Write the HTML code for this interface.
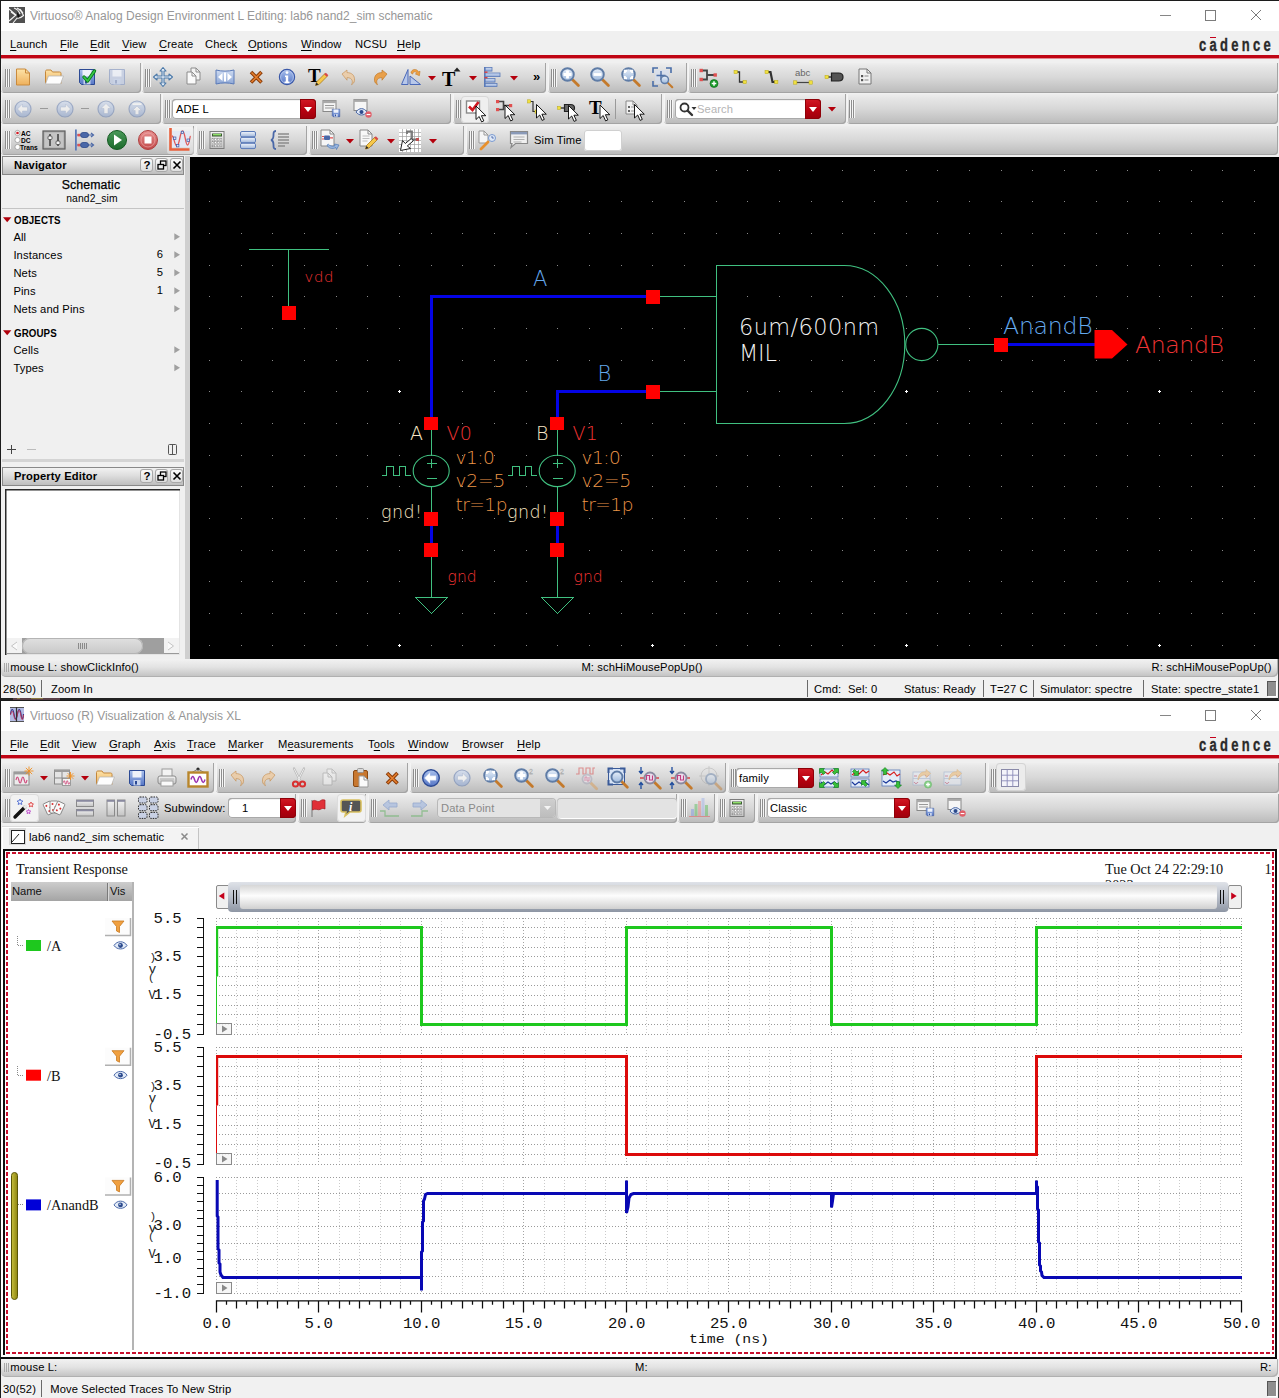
<!DOCTYPE html>
<html lang="en"><head><meta charset="utf-8"><title>Virtuoso</title><style>
html,body{margin:0;padding:0;}
body{width:1279px;height:1398px;overflow:hidden;background:#f0f0f0;position:relative;font-family:'Liberation Sans',sans-serif;font-size:11.2px;}
#root{position:absolute;left:0;top:0;width:1279px;height:1398px;overflow:hidden;}
#root div,#root svg,#root span.t{position:absolute;}
#root svg{overflow:visible;display:block;}
span.t{white-space:nowrap;letter-spacing:0.12px;}
u{text-decoration:underline;text-underline-offset:1.5px;text-decoration-thickness:1px;}
</style></head>
<body><div id="root">
<svg width="0" height="0" style="position:absolute"><defs>
<linearGradient id="gOr" x1="0" y1="0" x2="0" y2="1"><stop offset="0" stop-color="#fde3a8"/><stop offset="1" stop-color="#eeb05c"/></linearGradient>
<linearGradient id="gBl" x1="0" y1="0" x2="0" y2="1"><stop offset="0" stop-color="#a8c0ec"/><stop offset="1" stop-color="#5676c6"/></linearGradient>
<linearGradient id="gBlL" x1="0" y1="0" x2="0" y2="1"><stop offset="0" stop-color="#cfdcf2"/><stop offset="1" stop-color="#8fa8d6"/></linearGradient>
<linearGradient id="gGl" x1="0" y1="0" x2="0" y2="1"><stop offset="0" stop-color="#e8f0fa"/><stop offset="1" stop-color="#9db8dc"/></linearGradient>
<linearGradient id="gDb" x1="0" y1="0" x2="0" y2="1"><stop offset="0" stop-color="#f2f6fc"/><stop offset="1" stop-color="#9fb6da"/></linearGradient>
<linearGradient id="gGy" x1="0" y1="0" x2="0" y2="1"><stop offset="0" stop-color="#f4f4f4"/><stop offset="1" stop-color="#c4c4c4"/></linearGradient>
<linearGradient id="gGn" x1="0" y1="0" x2="0" y2="1"><stop offset="0" stop-color="#4a9a5a"/><stop offset="1" stop-color="#1c6a2c"/></linearGradient>
<linearGradient id="gRd" x1="0" y1="0" x2="0" y2="1"><stop offset="0" stop-color="#e89090"/><stop offset="1" stop-color="#c04848"/></linearGradient>
</defs></svg><div style="left:0px;top:0px;width:1279px;height:1px;background:#1c1c1c;"></div><div style="left:1px;top:1px;width:1278px;height:30px;background:#fff;"></div><svg style="left:9px;top:7px;" width="16" height="16" viewBox="0 0 16 16"><rect width="16" height="16" fill="#505050"/><path d="M0 2l7 6-7 6M2 5l5 3.5M5 1c3 1 5 3 6 6M8 1c3 1.5 5 4 6.5 7.5c-2 2-4 3-6.5 3M4 16l5-6M11 2l3 4" stroke="#f4f4f4" stroke-width="1.1" fill="none"/><path d="M8 5l3 4-2.5 2.5z" fill="#111"/></svg><span class="t" style="left:30px;top:10.14px;font-size:12px;line-height:12px;color:#979797;letter-spacing:0;">Virtuoso® Analog Design Environment L Editing: lab6 nand2_sim schematic</span><div style="left:1160px;top:15px;width:11px;height:1px;background:#868686;"></div><div style="left:1205px;top:10px;width:9px;height:9px;border:1px solid #7c7c7c;"></div><svg style="left:1250px;top:9px;" width="12" height="12" viewBox="0 0 12 12"><path d="M1 1l10 10M11 1l-10 10" stroke="#7a7a7a" stroke-width="1"/></svg><div style="left:1px;top:31px;width:1278px;height:24px;background:#f0f0f0;"></div><span class="t" style="left:10px;top:38.52px;font-size:11.2px;line-height:11.2px;color:#000;"><u>L</u>aunch</span><span class="t" style="left:60px;top:38.52px;font-size:11.2px;line-height:11.2px;color:#000;"><u>F</u>ile</span><span class="t" style="left:90px;top:38.52px;font-size:11.2px;line-height:11.2px;color:#000;"><u>E</u>dit</span><span class="t" style="left:122px;top:38.52px;font-size:11.2px;line-height:11.2px;color:#000;"><u>V</u>iew</span><span class="t" style="left:159px;top:38.52px;font-size:11.2px;line-height:11.2px;color:#000;"><u>C</u>reate</span><span class="t" style="left:205px;top:38.52px;font-size:11.2px;line-height:11.2px;color:#000;">Chec<u>k</u></span><span class="t" style="left:248px;top:38.52px;font-size:11.2px;line-height:11.2px;color:#000;"><u>O</u>ptions</span><span class="t" style="left:301px;top:38.52px;font-size:11.2px;line-height:11.2px;color:#000;"><u>W</u>indow</span><span class="t" style="left:355px;top:38.52px;font-size:11.2px;line-height:11.2px;color:#000;">NCSU</span><span class="t" style="left:397px;top:38.52px;font-size:11.2px;line-height:11.2px;color:#000;"><u>H</u>elp</span><span class="t" style="left:1199px;top:36.69px;font-size:17.5px;line-height:17.5px;color:#2a2a2a;font-weight:700;letter-spacing:4.5px;transform:scaleX(0.74);transform-origin:0 0;-webkit-text-stroke:0.35px #2a2a2a;">cadence</span><div style="left:1210px;top:37px;width:6px;height:1px;background:#c4001a;"></div><div style="left:1px;top:55px;width:1278px;height:3px;background:#c00414;"></div><div style="left:1px;top:58px;width:1278px;height:1px;background:#e08a92;"></div><div style="left:1px;top:62.5px;width:140px;height:30px;background:linear-gradient(#eeeeee 0%,#e6e6e6 14%,#d8d8d8 48%,#c3c3c3 85%,#b9b9b9 100%);border-radius:0 0 4px 4px;box-shadow:inset -1px -1px 0 #a4a4a4, inset 1px 0 0 #f4f4f4;"></div><div style="left:142px;top:62.5px;width:404px;height:30px;background:linear-gradient(#eeeeee 0%,#e6e6e6 14%,#d8d8d8 48%,#c3c3c3 85%,#b9b9b9 100%);border-radius:0 0 4px 4px;box-shadow:inset -1px -1px 0 #a4a4a4, inset 1px 0 0 #f4f4f4;"></div><div style="left:548px;top:62.5px;width:138.5px;height:30px;background:linear-gradient(#eeeeee 0%,#e6e6e6 14%,#d8d8d8 48%,#c3c3c3 85%,#b9b9b9 100%);border-radius:0 0 4px 4px;box-shadow:inset -1px -1px 0 #a4a4a4, inset 1px 0 0 #f4f4f4;"></div><div style="left:687.5px;top:62.5px;width:590.0px;height:30px;background:linear-gradient(#eeeeee 0%,#e6e6e6 14%,#d8d8d8 48%,#c3c3c3 85%,#b9b9b9 100%);border-radius:0 0 4px 4px;box-shadow:inset -1px -1px 0 #a4a4a4, inset 1px 0 0 #f4f4f4;"></div><div style="left:5px;top:69px;width:1px;height:18px;background:#8e8e8e;"></div><div style="left:6px;top:69px;width:1px;height:18px;background:#f6f6f6;"></div><div style="left:7px;top:69px;width:1px;height:18px;background:#8e8e8e;"></div><div style="left:8px;top:69px;width:1px;height:18px;background:#f6f6f6;"></div><div style="left:9px;top:69px;width:1px;height:18px;background:#8e8e8e;"></div><div style="left:10px;top:69px;width:1px;height:18px;background:#f6f6f6;"></div><div style="left:145px;top:69px;width:1px;height:18px;background:#8e8e8e;"></div><div style="left:146px;top:69px;width:1px;height:18px;background:#f6f6f6;"></div><div style="left:147px;top:69px;width:1px;height:18px;background:#8e8e8e;"></div><div style="left:148px;top:69px;width:1px;height:18px;background:#f6f6f6;"></div><div style="left:149px;top:69px;width:1px;height:18px;background:#8e8e8e;"></div><div style="left:150px;top:69px;width:1px;height:18px;background:#f6f6f6;"></div><div style="left:551px;top:69px;width:1px;height:18px;background:#8e8e8e;"></div><div style="left:552px;top:69px;width:1px;height:18px;background:#f6f6f6;"></div><div style="left:553px;top:69px;width:1px;height:18px;background:#8e8e8e;"></div><div style="left:554px;top:69px;width:1px;height:18px;background:#f6f6f6;"></div><div style="left:555px;top:69px;width:1px;height:18px;background:#8e8e8e;"></div><div style="left:556px;top:69px;width:1px;height:18px;background:#f6f6f6;"></div><div style="left:691px;top:69px;width:1px;height:18px;background:#8e8e8e;"></div><div style="left:692px;top:69px;width:1px;height:18px;background:#f6f6f6;"></div><div style="left:693px;top:69px;width:1px;height:18px;background:#8e8e8e;"></div><div style="left:694px;top:69px;width:1px;height:18px;background:#f6f6f6;"></div><div style="left:695px;top:69px;width:1px;height:18px;background:#8e8e8e;"></div><div style="left:696px;top:69px;width:1px;height:18px;background:#f6f6f6;"></div><svg style="left:11.0px;top:64.5px;" width="24" height="24" viewBox="0 0 24 24"><path d="M5.5 4h9l4 4v12h-13z" fill="url(#gOr)" stroke="#c98a3c" stroke-width="1"/><path d="M14.5 4v4h4" fill="none" stroke="#c98a3c" stroke-width="1"/></svg><svg style="left:42.0px;top:64.5px;" width="24" height="24" viewBox="0 0 24 24"><path d="M3.5 6.5c0-1 .5-1.5 1.5-1.5h4l1.5 2h7c1 0 1.5.5 1.5 1.5v10h-15.5z" fill="url(#gOr)" stroke="#c4873a" stroke-width="1"/><path d="M6.5 11h15l-3 8h-15z" fill="#fdfdfd" stroke="#b9b9b9" stroke-width="0.8"/></svg><svg style="left:75.0px;top:64.5px;" width="24" height="24" viewBox="0 0 24 24"><g opacity="1"><path d="M4.5 4.5h15v15h-13l-2-2z" fill="url(#gBl)" stroke="#2c4a94" stroke-width="1"/><rect x="7.5" y="5" width="9" height="6.5" fill="#eef2fa"/><rect x="8.5" y="14" width="7" height="5.5" fill="#c8d4ec"/><rect x="10" y="15" width="2" height="3.5" fill="#2c4a94"/></g><path d="M9 12l3.5 4 7-10" fill="none" stroke="#0a7a1a" stroke-width="3.4" stroke-linecap="round" stroke-linejoin="round"/><path d="M9 12l3.5 4 7-10" fill="none" stroke="#38c848" stroke-width="1.6" stroke-linecap="round" stroke-linejoin="round"/></svg><svg style="left:105.0px;top:64.5px;" width="24" height="24" viewBox="0 0 24 24"><g opacity="0.8"><path d="M4.5 4.5h15v15h-13l-2-2z" fill="#c4cee4" stroke="#97a6c8" stroke-width="1"/><rect x="7.5" y="5" width="9" height="6.5" fill="#eef2fa"/><rect x="8.5" y="14" width="7" height="5.5" fill="#c8d4ec"/><rect x="10" y="15" width="2" height="3.5" fill="#97a6c8"/></g></svg><svg style="left:151.0px;top:64.5px;" width="24" height="24" viewBox="0 0 24 24"><path d="M12 2.5l3 3.5h-2v5h5v-2l3.5 3-3.5 3v-2h-5v5h2l-3 3.5-3-3.5h2v-5h-5v2l-3.5-3 3.5-3v2h5v-5h-2z" fill="#e8f0fa" stroke="#4a78a8" stroke-width="1.1" stroke-linejoin="round"/></svg><svg style="left:182.0px;top:64.5px;" width="24" height="24" viewBox="0 0 24 24"><path d="M9 3h5l4 4v8h-9z" fill="#f4f4f4" stroke="#8c8c8c" stroke-width="1"/><path d="M14 3v4h4" fill="none" stroke="#8c8c8c" stroke-width="1"/><path d="M5 7h5l4 4v8h-9z" fill="#fafafa" stroke="#8c8c8c" stroke-width="1"/><path d="M10 7v4h4" fill="none" stroke="#8c8c8c" stroke-width="1"/></svg><svg style="left:213.0px;top:64.5px;" width="24" height="24" viewBox="0 0 24 24"><path d="M3 5c6 1.5 12 1.5 18 0v14c-6-1.5-12-1.5-18 0z" fill="url(#gBlL)" stroke="#5a7ab8" stroke-width="1"/><path d="M5 12l4.5-4v8zM19 12l-4.5-4v8z" fill="#fff"/><rect x="11" y="7.5" width="2" height="9" fill="#fff"/></svg><svg style="left:244.0px;top:64.5px;" width="24" height="24" viewBox="0 0 24 24"><path d="M7 7l10.5 10.5M17.5 7l-10.5 10.5" stroke="#8a3c08" stroke-width="3.6" stroke-linecap="butt"/><path d="M7.5 7.5l9.5 9.5M17 7.5l-9.5 9.5" stroke="#e88030" stroke-width="1.5" stroke-linecap="butt"/></svg><svg style="left:275.0px;top:64.5px;" width="24" height="24" viewBox="0 0 24 24"><circle cx="12" cy="12" r="7.6" fill="url(#gBl)" stroke="#3a58a8" stroke-width="1.2"/><circle cx="12" cy="12" r="6.4" fill="none" stroke="#b8c8ec" stroke-width="0.8"/><circle cx="12" cy="7.6" r="1.4" fill="#fff"/><path d="M10 10.5h3.2v6h1.3v1.4h-5v-1.4h1.3v-4.6h-.8z" fill="#fff"/></svg><svg style="left:306.0px;top:64.5px;" width="24" height="24" viewBox="0 0 24 24"><text x="2" y="17" font-family="Liberation Serif, serif" font-weight="700" font-size="19" fill="#000">T</text><path d="M9.5 20.5l1-3.5 8.5-8.5 2.5 2.5-8.5 8.5z" fill="#f6c84a" stroke="#a8781c" stroke-width="0.8"/><path d="M19 8.5l2.5 2.5" stroke="#d84848" stroke-width="2.4"/><path d="M9.5 20.5l1-3 2 2z" fill="#222"/></svg><svg style="left:337.0px;top:64.5px;" width="24" height="24" viewBox="0 0 24 24"><path d="M5 9l5-4v2.6c5 0 8 3 7.5 8-.3 2-1.5 3.4-3 4 1.4-2 1.6-7-4.5-7v2.6z" fill="#f0c898" stroke="#c07828" stroke-width="0.7" opacity="0.7"/></svg><svg style="left:368.0px;top:64.5px;" width="24" height="24" viewBox="0 0 24 24"><path d="M19 9l-5-4v2.6c-5 0-8 3-7.5 8 .3 2 1.5 3.4 3 4-1.4-2-1.6-7 4.5-7v2.6z" fill="#e9a04a" stroke="#c07828" stroke-width="0.7" opacity="1"/></svg><svg style="left:399.0px;top:64.5px;" width="24" height="24" viewBox="0 0 24 24"><path d="M2.5 19.5l6.5-15v15z" fill="#b8c8ea" stroke="#4a68b8" stroke-width="1"/><path d="M11 19.5h10.5l-10.5-8.5z" fill="#b8c8ea" stroke="#4a68b8" stroke-width="1"/><path d="M12 8c0-4 6-5 7.5-1l1.5-.8-.6 4.5-4-1.8 1.4-.8c-1-2-4-1.5-4 1z" fill="#f0a040" stroke="#c07828" stroke-width="0.6"/></svg><svg style="left:439.0px;top:64.5px;" width="24" height="24" viewBox="0 0 24 24"><text x="3" y="21" font-family="Liberation Serif, serif" font-weight="700" font-size="20" fill="#000">T</text><path d="M14.5 6.5l3.5-4 3.5 4z" fill="#222"/></svg><svg style="left:481.0px;top:64.5px;" width="24" height="24" viewBox="0 0 24 24"><rect x="4" y="2.5" width="7" height="3.6" fill="url(#gBlL)" stroke="#5a7ab8" stroke-width="0.8"/><rect x="4" y="8" width="15" height="3.6" fill="url(#gBlL)" stroke="#5a7ab8" stroke-width="0.8"/><rect x="4" y="13.5" width="10" height="3.6" fill="url(#gBlL)" stroke="#5a7ab8" stroke-width="0.8"/><rect x="4" y="18.5" width="12" height="3" fill="url(#gBlL)" stroke="#5a7ab8" stroke-width="0.8"/><rect x="3" y="2" width="1.4" height="20" fill="#5a7ab8"/><rect x="3.5" y="6.5" width="3" height="1.4" fill="#d84040"/><rect x="3.5" y="12" width="3" height="1.4" fill="#d84040"/></svg><svg style="left:558.0px;top:64.5px;" width="24" height="24" viewBox="0 0 24 24"><g opacity="1"><line x1="13.91" y1="13.91" x2="20.41" y2="20.41" stroke="#c47a2c" stroke-width="2.8" stroke-linecap="round"/><circle cx="9.5" cy="9.5" r="6.3" fill="url(#gGl)" stroke="#5f7ca6" stroke-width="1.9"/></g><path d="M9.5 5.5v8M5.5 9.5h8" stroke="#fff" stroke-width="2.8"/></svg><svg style="left:588.0px;top:64.5px;" width="24" height="24" viewBox="0 0 24 24"><g opacity="1"><line x1="13.91" y1="13.91" x2="20.41" y2="20.41" stroke="#c47a2c" stroke-width="2.8" stroke-linecap="round"/><circle cx="9.5" cy="9.5" r="6.3" fill="url(#gGl)" stroke="#5f7ca6" stroke-width="1.9"/></g><path d="M5.5 9.5h8" stroke="#fff" stroke-width="2.8"/></svg><svg style="left:619.0px;top:64.5px;" width="24" height="24" viewBox="0 0 24 24"><g opacity="1"><line x1="13.91" y1="13.91" x2="20.41" y2="20.41" stroke="#c47a2c" stroke-width="2.8" stroke-linecap="round"/><circle cx="9.5" cy="9.5" r="6.3" fill="url(#gGl)" stroke="#5f7ca6" stroke-width="1.9"/></g><path d="M5.8 8v-2.2h2.2M13.2 8v-2.2h-2.2M5.8 11v2.2h2.2M13.2 11v2.2h-2.2" stroke="#fff" stroke-width="2" fill="none"/></svg><svg style="left:650.0px;top:64.5px;" width="24" height="24" viewBox="0 0 24 24"><path d="M3 8v-5h5M16 3h5v5M3 16v5h5" fill="none" stroke="#4a6ea8" stroke-width="1.6"/><rect x="5" y="5" width="14" height="14" fill="#d4e0f4" opacity="0.6"/><path d="M11 6v9M6.5 10.5h9" stroke="#4a6ea8" stroke-width="1.4"/><g transform="translate(8 8) scale(0.75)"><g opacity="1"><line x1="12.5" y1="12.5" x2="19.0" y2="19.0" stroke="#c47a2c" stroke-width="2.8" stroke-linecap="round"/><circle cx="9" cy="9" r="5" fill="url(#gGl)" stroke="#5f7ca6" stroke-width="1.9"/></g></g></svg><svg style="left:697.0px;top:64.5px;" width="24" height="24" viewBox="0 0 24 24"><path d="M5 5.5h5v9h-5M10 10h7" fill="none" stroke="#444" stroke-width="1.8"/><rect x="2.5" y="3.8" width="3.4" height="3.4" fill="#e05050"/><rect x="2.5" y="12.8" width="3.4" height="3.4" fill="#e05050"/><rect x="16.5" y="8.3" width="3.4" height="3.4" fill="#e05050"/><circle cx="17" cy="18.5" r="4" fill="#1a9a2a" stroke="#0a6a18" stroke-width="0.6"/><path d="M17 16.2v4.6M14.7 18.5h4.6" stroke="#fff" stroke-width="1.5"/></svg><svg style="left:729.0px;top:64.5px;" width="24" height="24" viewBox="0 0 24 24"><path d="M7 7h3.5v10h4.5" fill="none" stroke="#333" stroke-width="1.3"/><rect x="5" y="5.3" width="3.4" height="3.4" fill="#f0e040" stroke="#b8a820" stroke-width="0.5"/><rect x="14" y="15.3" width="3.4" height="3.4" fill="#f0e040" stroke="#b8a820" stroke-width="0.5"/></svg><svg style="left:760.0px;top:64.5px;" width="24" height="24" viewBox="0 0 24 24"><path d="M7 7h3.5l2 10h3" fill="none" stroke="#333" stroke-width="2.2"/><rect x="5" y="5.3" width="3.4" height="3.4" fill="#f0e040" stroke="#b8a820" stroke-width="0.5"/><rect x="14.5" y="15.3" width="3.4" height="3.4" fill="#f0e040" stroke="#b8a820" stroke-width="0.5"/></svg><svg style="left:791.0px;top:64.5px;" width="24" height="24" viewBox="0 0 24 24"><text x="4" y="11" font-family="Liberation Sans, sans-serif" font-size="9.5" fill="#666">abc</text><path d="M4 17.5h16" stroke="#444" stroke-width="1.2"/><rect x="2.5" y="15.8" width="3.4" height="3.4" fill="#f0e040" stroke="#b8a820" stroke-width="0.5"/><rect x="18" y="15.8" width="3.4" height="3.4" fill="#f0e040" stroke="#b8a820" stroke-width="0.5"/></svg><svg style="left:822.0px;top:64.5px;" width="24" height="24" viewBox="0 0 24 24"><path d="M5 12h5" stroke="#333" stroke-width="1.4"/><path d="M9.5 8h7c3 0 4.5 2 4.5 4s-1.5 4-4.5 4h-7z" fill="#555" stroke="#222" stroke-width="1.2"/><rect x="3" y="10.3" width="3.4" height="3.4" fill="#f0e040" stroke="#b8a820" stroke-width="0.5"/></svg><svg style="left:853.0px;top:64.5px;" width="24" height="24" viewBox="0 0 24 24"><path d="M6 4h8l4 4v11h-12z" fill="#f2f2f2" stroke="#777" stroke-width="1"/><path d="M14 4v4h4" fill="none" stroke="#777" stroke-width="1"/><rect x="8" y="10" width="2.2" height="2.2" fill="#555"/><rect x="8" y="14" width="2.2" height="2.2" fill="#555"/><path d="M11.5 11h4M11.5 15h4" stroke="#888" stroke-width="1"/></svg><svg style="left:428px;top:75.5px;" width="9" height="6" viewBox="0 0 9 6"><path d="M0 0h8L4 4.5z" fill="#b4000c"/></svg><svg style="left:469px;top:75.5px;" width="9" height="6" viewBox="0 0 9 6"><path d="M0 0h8L4 4.5z" fill="#b4000c"/></svg><svg style="left:510px;top:75.5px;" width="9" height="6" viewBox="0 0 9 6"><path d="M0 0h8L4 4.5z" fill="#b4000c"/></svg><span class="t" style="left:533px;top:70.00px;font-size:13px;line-height:13px;color:#000;font-weight:700;">»</span><div style="left:1px;top:93.5px;width:160px;height:30.5px;background:linear-gradient(#eeeeee 0%,#e6e6e6 14%,#d8d8d8 48%,#c3c3c3 85%,#b9b9b9 100%);border-radius:0 0 4px 4px;box-shadow:inset -1px -1px 0 #a4a4a4, inset 1px 0 0 #f4f4f4;"></div><div style="left:162px;top:93.5px;width:289px;height:30.5px;background:linear-gradient(#eeeeee 0%,#e6e6e6 14%,#d8d8d8 48%,#c3c3c3 85%,#b9b9b9 100%);border-radius:0 0 4px 4px;box-shadow:inset -1px -1px 0 #a4a4a4, inset 1px 0 0 #f4f4f4;"></div><div style="left:453px;top:93.5px;width:209px;height:30.5px;background:linear-gradient(#eeeeee 0%,#e6e6e6 14%,#d8d8d8 48%,#c3c3c3 85%,#b9b9b9 100%);border-radius:0 0 4px 4px;box-shadow:inset -1px -1px 0 #a4a4a4, inset 1px 0 0 #f4f4f4;"></div><div style="left:664px;top:93.5px;width:182px;height:30.5px;background:linear-gradient(#eeeeee 0%,#e6e6e6 14%,#d8d8d8 48%,#c3c3c3 85%,#b9b9b9 100%);border-radius:0 0 4px 4px;box-shadow:inset -1px -1px 0 #a4a4a4, inset 1px 0 0 #f4f4f4;"></div><div style="left:847px;top:93.5px;width:430.5px;height:30.5px;background:linear-gradient(#eeeeee 0%,#e6e6e6 14%,#d8d8d8 48%,#c3c3c3 85%,#b9b9b9 100%);border-radius:0 0 4px 4px;box-shadow:inset -1px -1px 0 #a4a4a4, inset 1px 0 0 #f4f4f4;"></div><div style="left:5px;top:100px;width:1px;height:18px;background:#8e8e8e;"></div><div style="left:6px;top:100px;width:1px;height:18px;background:#f6f6f6;"></div><div style="left:7px;top:100px;width:1px;height:18px;background:#8e8e8e;"></div><div style="left:8px;top:100px;width:1px;height:18px;background:#f6f6f6;"></div><div style="left:9px;top:100px;width:1px;height:18px;background:#8e8e8e;"></div><div style="left:10px;top:100px;width:1px;height:18px;background:#f6f6f6;"></div><div style="left:165px;top:100px;width:1px;height:18px;background:#8e8e8e;"></div><div style="left:166px;top:100px;width:1px;height:18px;background:#f6f6f6;"></div><div style="left:167px;top:100px;width:1px;height:18px;background:#8e8e8e;"></div><div style="left:168px;top:100px;width:1px;height:18px;background:#f6f6f6;"></div><div style="left:169px;top:100px;width:1px;height:18px;background:#8e8e8e;"></div><div style="left:170px;top:100px;width:1px;height:18px;background:#f6f6f6;"></div><div style="left:456px;top:100px;width:1px;height:18px;background:#8e8e8e;"></div><div style="left:457px;top:100px;width:1px;height:18px;background:#f6f6f6;"></div><div style="left:458px;top:100px;width:1px;height:18px;background:#8e8e8e;"></div><div style="left:459px;top:100px;width:1px;height:18px;background:#f6f6f6;"></div><div style="left:460px;top:100px;width:1px;height:18px;background:#8e8e8e;"></div><div style="left:461px;top:100px;width:1px;height:18px;background:#f6f6f6;"></div><div style="left:667px;top:100px;width:1px;height:18px;background:#8e8e8e;"></div><div style="left:668px;top:100px;width:1px;height:18px;background:#f6f6f6;"></div><div style="left:669px;top:100px;width:1px;height:18px;background:#8e8e8e;"></div><div style="left:670px;top:100px;width:1px;height:18px;background:#f6f6f6;"></div><div style="left:671px;top:100px;width:1px;height:18px;background:#8e8e8e;"></div><div style="left:672px;top:100px;width:1px;height:18px;background:#f6f6f6;"></div><div style="left:849px;top:100px;width:1px;height:18px;background:#8e8e8e;"></div><div style="left:850px;top:100px;width:1px;height:18px;background:#f6f6f6;"></div><div style="left:851px;top:100px;width:1px;height:18px;background:#8e8e8e;"></div><div style="left:852px;top:100px;width:1px;height:18px;background:#f6f6f6;"></div><div style="left:853px;top:100px;width:1px;height:18px;background:#8e8e8e;"></div><div style="left:854px;top:100px;width:1px;height:18px;background:#f6f6f6;"></div><svg style="left:11.0px;top:96.5px;" width="24" height="24" viewBox="0 0 24 24"><g opacity="0.55"><circle cx="12" cy="12" r="8" fill="url(#gBlL)" stroke="#6c84b4" stroke-width="1.2"/><path d="M6.5 12l5-5v3h5v4h-5v3z" fill="#fff" stroke="#8ea2c8" stroke-width="0.5"/></g></svg><svg style="left:53.0px;top:96.5px;" width="24" height="24" viewBox="0 0 24 24"><g opacity="0.55"><circle cx="12" cy="12" r="8" fill="url(#gBlL)" stroke="#6c84b4" stroke-width="1.2"/><path d="M17.5 12l-5-5v3h-5v4h5v3z" fill="#fff" stroke="#8ea2c8" stroke-width="0.5"/></g></svg><svg style="left:94.0px;top:96.5px;" width="24" height="24" viewBox="0 0 24 24"><g opacity="0.55"><circle cx="12" cy="12" r="8" fill="url(#gBlL)" stroke="#6c84b4" stroke-width="1.2"/><path d="M12 6.5l5 5h-3v5h-4v-5h-3z" fill="#fff" stroke="#8ea2c8" stroke-width="0.5"/></g></svg><svg style="left:125.0px;top:96.5px;" width="24" height="24" viewBox="0 0 24 24"><g opacity="0.55"><circle cx="12" cy="12" r="8" fill="url(#gBlL)" stroke="#6c84b4" stroke-width="1.2"/><path d="M12 9l4.5 4.5h-2.7v4h-3.6v-4h-2.7z" fill="#fff" stroke="#8ea2c8" stroke-width="0.5"/><rect x="7.5" y="6.2" width="9" height="1.8" fill="#fff"/></g></svg><div style="left:40px;top:108px;width:8px;height:1px;background:#9a9a9a;"></div><div style="left:81px;top:108px;width:8px;height:1px;background:#9a9a9a;"></div><div style="left:172px;top:98.5px;width:144px;height:20.5px;background:#fff;border-radius:4px;box-shadow:inset 0 0 0 1px #a9a9a9, inset 0 2px 1px -1px #888;"></div><div style="left:300px;top:98.5px;width:16px;height:20.5px;background:linear-gradient(#d21a26 0%,#b8000f 55%,#9c000c 100%);border-radius:0 4px 4px 0;box-shadow:inset 0 0 0 1px #8e0008;"></div><svg style="left:304px;top:106.75px;" width="9" height="6" viewBox="0 0 9 6"><path d="M0 0h8L4 5z" fill="#fff"/></svg><span class="t" style="left:176px;top:103.97px;font-size:11.2px;line-height:11.2px;color:#000;">ADE L</span><svg style="left:319.0px;top:96.5px;" width="24" height="24" viewBox="0 0 24 24"><rect x="4" y="3.5" width="13" height="11" fill="#f4f4f4" stroke="#888" stroke-width="1"/><rect x="4" y="3.5" width="13" height="2.6" fill="#a9a9a9"/><path d="M6 8.5h9M6 11h9" stroke="#999" stroke-width="1"/><g transform="translate(11 10) scale(0.5)"><g opacity="1"><path d="M4.5 4.5h15v15h-13l-2-2z" fill="url(#gBl)" stroke="#2c4a94" stroke-width="1"/><rect x="7.5" y="5" width="9" height="6.5" fill="#eef2fa"/><rect x="8.5" y="14" width="7" height="5.5" fill="#c8d4ec"/><rect x="10" y="15" width="2" height="3.5" fill="#2c4a94"/></g></g></svg><svg style="left:350.0px;top:96.5px;" width="24" height="24" viewBox="0 0 24 24"><rect x="4" y="2.5" width="13" height="11" fill="#f6f6f6" stroke="#888" stroke-width="1"/><rect x="4" y="2.5" width="13" height="2.4" fill="#a9a9a9"/><path d="M6 15c3-4.5 8-4.5 11 0-3 4-8 4-11 0z" fill="#dfe8f6" stroke="#4a68a8" stroke-width="1"/><circle cx="11.5" cy="15" r="2" fill="#2c4a8c"/><circle cx="18.5" cy="17.5" r="3.2" fill="#e0606a"/><rect x="16.6" y="17" width="3.8" height="1.1" fill="#fff"/></svg><div style="left:461px;top:96px;width:28px;height:27px;background:#efefef;border-radius:4px;box-shadow:inset 0 0 0 1px #d8d8d8;"></div><svg style="left:463.0px;top:96.5px;" width="24" height="24" viewBox="0 0 24 24"><rect x="3.5" y="4" width="13" height="12" fill="#fff" stroke="#8a8a8a" stroke-width="1.4"/><path d="M6 9.5l3.5 3.5 6-8" fill="none" stroke="#d01820" stroke-width="2.6"/><path transform="translate(13 9) scale(1.0)" d="M0 0v13.5l3.2-3 2.4 5.4 2.2-1-2.4-5.2h4.4z" fill="#fff" stroke="#000" stroke-width="0.9" stroke-linejoin="round"/></svg><svg style="left:494.0px;top:96.5px;" width="24" height="24" viewBox="0 0 24 24"><path d="M4.5 4.5h5v8h-5M9.5 8.5h6" fill="none" stroke="#444" stroke-width="1.6"/><rect x="2" y="3" width="3.2" height="3.2" fill="#e05050"/><rect x="2" y="11" width="3.2" height="3.2" fill="#e05050"/><rect x="15" y="7" width="3.2" height="3.2" fill="#e05050"/><path transform="translate(11 8) scale(1.0)" d="M0 0v13.5l3.2-3 2.4 5.4 2.2-1-2.4-5.2h4.4z" fill="#fff" stroke="#000" stroke-width="0.9" stroke-linejoin="round"/></svg><svg style="left:525.0px;top:96.5px;" width="24" height="24" viewBox="0 0 24 24"><path d="M4.5 4.5h3.5v10h4" fill="none" stroke="#333" stroke-width="1.2"/><rect x="2.5" y="2.8" width="3.2" height="3.2" fill="#f0e040" stroke="#b8a820" stroke-width="0.5"/><rect x="10" y="13" width="3.2" height="3.2" fill="#f0e040" stroke="#b8a820" stroke-width="0.5"/><path transform="translate(11.5 7.5) scale(1.0)" d="M0 0v13.5l3.2-3 2.4 5.4 2.2-1-2.4-5.2h4.4z" fill="#fff" stroke="#000" stroke-width="0.9" stroke-linejoin="round"/></svg><svg style="left:556.0px;top:96.5px;" width="24" height="24" viewBox="0 0 24 24"><path d="M3 11h5" stroke="#333" stroke-width="1.4"/><path d="M8.5 7.5h6c2.5 0 4 1.6 4 3.5s-1.5 3.5-4 3.5h-6z" fill="#666" stroke="#222" stroke-width="1.2"/><rect x="1.5" y="9.3" width="3.2" height="3.2" fill="#f0e040" stroke="#b8a820" stroke-width="0.5"/><path transform="translate(12.5 8.5) scale(1.0)" d="M0 0v13.5l3.2-3 2.4 5.4 2.2-1-2.4-5.2h4.4z" fill="#fff" stroke="#000" stroke-width="0.9" stroke-linejoin="round"/></svg><svg style="left:587.0px;top:96.5px;" width="24" height="24" viewBox="0 0 24 24"><text x="2" y="17" font-family="Liberation Serif, serif" font-weight="700" font-size="19" fill="#000">T</text><path transform="translate(13 8) scale(1.0)" d="M0 0v13.5l3.2-3 2.4 5.4 2.2-1-2.4-5.2h4.4z" fill="#fff" stroke="#000" stroke-width="0.9" stroke-linejoin="round"/></svg><svg style="left:622.0px;top:96.5px;" width="24" height="24" viewBox="0 0 24 24"><path d="M4 4h7l4 4v9h-11z" fill="#f2f2f2" stroke="#888" stroke-width="1"/><path d="M11 4v4h4" fill="none" stroke="#888" stroke-width="1"/><rect x="6" y="9" width="2" height="2" fill="#666"/><rect x="6" y="13" width="2" height="2" fill="#666"/><path d="M9 10h4M9 14h3" stroke="#999" stroke-width="1"/><path transform="translate(12.5 7.5) scale(1.0)" d="M0 0v13.5l3.2-3 2.4 5.4 2.2-1-2.4-5.2h4.4z" fill="#fff" stroke="#000" stroke-width="0.9" stroke-linejoin="round"/></svg><div style="left:615px;top:99px;width:1px;height:20px;background:#9a9a9a;"></div><div style="left:675px;top:99px;width:146px;height:20px;background:#fff;border-radius:4px;box-shadow:inset 0 0 0 1px #a9a9a9, inset 0 2px 1px -1px #888;"></div><div style="left:805px;top:99px;width:16px;height:20px;background:linear-gradient(#d21a26 0%,#b8000f 55%,#9c000c 100%);border-radius:0 4px 4px 0;box-shadow:inset 0 0 0 1px #8e0008;"></div><svg style="left:809px;top:107px;" width="9" height="6" viewBox="0 0 9 6"><path d="M0 0h8L4 5z" fill="#fff"/></svg><svg style="left:678px;top:101px;" width="20" height="16" viewBox="0 0 20 16"><line x1="9.5" y1="9.5" x2="14" y2="14" stroke="#333" stroke-width="2.4" stroke-linecap="round"/><circle cx="6.5" cy="6.5" r="4" fill="#fff" stroke="#333" stroke-width="1.8"/><path d="M13.5 6h5l-2.5 3z" fill="#333"/></svg><span class="t" style="left:697px;top:103.52px;font-size:11.2px;line-height:11.2px;color:#b4b4b4;">Search</span><svg style="left:828px;top:106.5px;" width="9" height="6" viewBox="0 0 9 6"><path d="M0 0h8L4 4.5z" fill="#b4000c"/></svg><div style="left:1px;top:125.5px;width:193px;height:29px;background:linear-gradient(#eeeeee 0%,#e6e6e6 14%,#d8d8d8 48%,#c3c3c3 85%,#b9b9b9 100%);border-radius:0 0 4px 4px;box-shadow:inset -1px -1px 0 #a4a4a4, inset 1px 0 0 #f4f4f4;"></div><div style="left:195.5px;top:125.5px;width:111px;height:29px;background:linear-gradient(#eeeeee 0%,#e6e6e6 14%,#d8d8d8 48%,#c3c3c3 85%,#b9b9b9 100%);border-radius:0 0 4px 4px;box-shadow:inset -1px -1px 0 #a4a4a4, inset 1px 0 0 #f4f4f4;"></div><div style="left:309px;top:125.5px;width:155px;height:29px;background:linear-gradient(#eeeeee 0%,#e6e6e6 14%,#d8d8d8 48%,#c3c3c3 85%,#b9b9b9 100%);border-radius:0 0 4px 4px;box-shadow:inset -1px -1px 0 #a4a4a4, inset 1px 0 0 #f4f4f4;"></div><div style="left:466px;top:125.5px;width:811.5px;height:29px;background:linear-gradient(#eeeeee 0%,#e6e6e6 14%,#d8d8d8 48%,#c3c3c3 85%,#b9b9b9 100%);border-radius:0 0 4px 4px;box-shadow:inset -1px -1px 0 #a4a4a4, inset 1px 0 0 #f4f4f4;"></div><div style="left:5px;top:131px;width:1px;height:18px;background:#8e8e8e;"></div><div style="left:6px;top:131px;width:1px;height:18px;background:#f6f6f6;"></div><div style="left:7px;top:131px;width:1px;height:18px;background:#8e8e8e;"></div><div style="left:8px;top:131px;width:1px;height:18px;background:#f6f6f6;"></div><div style="left:9px;top:131px;width:1px;height:18px;background:#8e8e8e;"></div><div style="left:10px;top:131px;width:1px;height:18px;background:#f6f6f6;"></div><div style="left:199px;top:131px;width:1px;height:18px;background:#8e8e8e;"></div><div style="left:200px;top:131px;width:1px;height:18px;background:#f6f6f6;"></div><div style="left:201px;top:131px;width:1px;height:18px;background:#8e8e8e;"></div><div style="left:202px;top:131px;width:1px;height:18px;background:#f6f6f6;"></div><div style="left:203px;top:131px;width:1px;height:18px;background:#8e8e8e;"></div><div style="left:204px;top:131px;width:1px;height:18px;background:#f6f6f6;"></div><div style="left:312px;top:131px;width:1px;height:18px;background:#8e8e8e;"></div><div style="left:313px;top:131px;width:1px;height:18px;background:#f6f6f6;"></div><div style="left:314px;top:131px;width:1px;height:18px;background:#8e8e8e;"></div><div style="left:315px;top:131px;width:1px;height:18px;background:#f6f6f6;"></div><div style="left:316px;top:131px;width:1px;height:18px;background:#8e8e8e;"></div><div style="left:317px;top:131px;width:1px;height:18px;background:#f6f6f6;"></div><div style="left:469px;top:131px;width:1px;height:18px;background:#8e8e8e;"></div><div style="left:470px;top:131px;width:1px;height:18px;background:#f6f6f6;"></div><div style="left:471px;top:131px;width:1px;height:18px;background:#8e8e8e;"></div><div style="left:472px;top:131px;width:1px;height:18px;background:#f6f6f6;"></div><div style="left:473px;top:131px;width:1px;height:18px;background:#8e8e8e;"></div><div style="left:474px;top:131px;width:1px;height:18px;background:#f6f6f6;"></div><div style="left:167px;top:126.5px;width:27px;height:27px;background:rgba(255,255,255,0.4);border-radius:3px;"></div><svg style="left:11.5px;top:128.0px;" width="24" height="24" viewBox="0 0 24 24"><circle cx="5.5" cy="5" r="2.6" fill="#fff" stroke="#999" stroke-width="0.8"/><circle cx="5.5" cy="5" r="1.3" fill="#d01820"/><circle cx="5.5" cy="12" r="2.6" fill="#fff" stroke="#999" stroke-width="0.8"/><circle cx="5.5" cy="19" r="2.6" fill="#fff" stroke="#999" stroke-width="0.8"/><text x="9" y="8" font-family="Liberation Sans, sans-serif" font-weight="700" font-size="6.6" fill="#000">AC</text><text x="9" y="15" font-family="Liberation Sans, sans-serif" font-weight="700" font-size="6.6" fill="#000">DC</text><text x="8" y="22" font-family="Liberation Sans, sans-serif" font-weight="700" font-size="6.6" fill="#000">Trans</text></svg><svg style="left:42.0px;top:128.0px;" width="24" height="24" viewBox="0 0 24 24"><rect x="1" y="3" width="22" height="18" fill="#a8a8a8" stroke="#5c5c5c" stroke-width="1.2"/><rect x="2.5" y="4.5" width="19" height="15" fill="#c4c4c4"/><path d="M8 6v12M16 6v12" stroke="#333" stroke-width="1.4"/><rect x="6" y="8" width="4" height="3.5" rx="1" fill="#f4f4f4" stroke="#444" stroke-width="0.8"/><rect x="14" y="13" width="4" height="3.5" rx="1" fill="#f4f4f4" stroke="#444" stroke-width="0.8"/></svg><svg style="left:73.0px;top:128.0px;" width="24" height="24" viewBox="0 0 24 24"><rect x="2" y="1.5" width="1.8" height="21" fill="#5a7ab8"/><path d="M4 7h4M4 17h4M15 7h5M15 17h5" stroke="#4a68a8" stroke-width="1.2"/><path d="M18 5l2.5 2-2.5 2M18 15l2.5 2-2.5 2" fill="none" stroke="#4a68a8" stroke-width="1.2"/><rect x="7.5" y="4.5" width="8" height="5" rx="2.5" fill="#4a68a8" stroke="#2c4a8c" stroke-width="0.8"/><rect x="7.5" y="14.5" width="8" height="5" rx="2.5" fill="#4a68a8" stroke="#2c4a8c" stroke-width="0.8"/><rect x="4.5" y="5.8" width="2.6" height="2.6" fill="#e05050"/><rect x="4.5" y="15.8" width="2.6" height="2.6" fill="#e05050"/></svg><svg style="left:105.0px;top:128.0px;" width="24" height="24" viewBox="0 0 24 24"><circle cx="12" cy="12" r="9.5" fill="url(#gGn)" stroke="#145a22" stroke-width="1"/><path d="M9 6.5l8 5.5-8 5.5z" fill="#fff"/></svg><svg style="left:136.0px;top:128.0px;" width="24" height="24" viewBox="0 0 24 24"><circle cx="12" cy="12" r="9.5" fill="url(#gRd)" stroke="#b04040" stroke-width="1"/><circle cx="12" cy="12" r="7" fill="none" stroke="#f0b0b0" stroke-width="1" opacity="0.6"/><rect x="8.5" y="8.5" width="7" height="7" fill="#fff"/></svg><svg style="left:168.0px;top:128.0px;" width="24" height="24" viewBox="0 0 24 24"><rect x="3" y="3" width="19" height="16" fill="#e4e8f4"/><path d="M2.5 0v21.5h19" fill="none" stroke="#e8603c" stroke-width="2.6"/><path d="M4 8c2 0 2.5 10 5 10s3-15 5.5-15 3 14 5 14 2-8 3-9" fill="none" stroke="#e05858" stroke-width="1.3"/><rect x="5.5" y="9" width="2.4" height="2.4" fill="#dfe6f8" stroke="#3a58a8" stroke-width="0.7"/><rect x="8.5" y="16.5" width="2.4" height="2.4" fill="#dfe6f8" stroke="#3a58a8" stroke-width="0.7"/><rect x="13.2" y="3.2" width="2.4" height="2.4" fill="#dfe6f8" stroke="#3a58a8" stroke-width="0.7"/><rect x="19" y="11" width="2.4" height="2.4" fill="#dfe6f8" stroke="#3a58a8" stroke-width="0.7"/></svg><svg style="left:205.0px;top:128.0px;" width="24" height="24" viewBox="0 0 24 24"><rect x="5" y="3.5" width="14" height="17" fill="url(#gGy)" stroke="#7c7c7c" stroke-width="1"/><rect x="7" y="5.5" width="10" height="3" fill="#3c5a34"/><rect x="8" y="6" width="8" height="1.4" fill="#8fe06a"/><rect x="7.0" y="10.5" width="1.7" height="1.9" fill="#fff" stroke="#888" stroke-width="0.5"/><rect x="9.7" y="10.5" width="1.7" height="1.9" fill="#fff" stroke="#888" stroke-width="0.5"/><rect x="12.4" y="10.5" width="1.7" height="1.9" fill="#fff" stroke="#888" stroke-width="0.5"/><rect x="15.1" y="10.5" width="1.7" height="1.9" fill="#fff" stroke="#888" stroke-width="0.5"/><rect x="7.0" y="13.7" width="1.7" height="1.9" fill="#fff" stroke="#888" stroke-width="0.5"/><rect x="9.7" y="13.7" width="1.7" height="1.9" fill="#fff" stroke="#888" stroke-width="0.5"/><rect x="12.4" y="13.7" width="1.7" height="1.9" fill="#fff" stroke="#888" stroke-width="0.5"/><rect x="15.1" y="13.7" width="1.7" height="1.9" fill="#fff" stroke="#888" stroke-width="0.5"/><rect x="7.0" y="16.9" width="1.7" height="1.9" fill="#fff" stroke="#888" stroke-width="0.5"/><rect x="9.7" y="16.9" width="1.7" height="1.9" fill="#fff" stroke="#888" stroke-width="0.5"/><rect x="12.4" y="16.9" width="1.7" height="1.9" fill="#fff" stroke="#888" stroke-width="0.5"/><rect x="15.1" y="16.9" width="1.7" height="1.9" fill="#fff" stroke="#888" stroke-width="0.5"/></svg><svg style="left:236.0px;top:128.0px;" width="24" height="24" viewBox="0 0 24 24"><rect x="4.5" y="3.5" width="15" height="5.3" rx="1.5" fill="url(#gDb)" stroke="#5a7ab8" stroke-width="1"/><rect x="4.5" y="9.4" width="15" height="5.3" rx="1.5" fill="url(#gDb)" stroke="#5a7ab8" stroke-width="1"/><rect x="4.5" y="15.3" width="15" height="5.3" rx="1.5" fill="url(#gDb)" stroke="#5a7ab8" stroke-width="1"/></svg><svg style="left:268.0px;top:128.0px;" width="24" height="24" viewBox="0 0 24 24"><path d="M8 3c-2.5 0-2.5 1.5-2.5 4s0 4.5-2.5 5c2.5.500 2.5 2.5 2.5 5s0 4 2.5 4" fill="none" stroke="#4a68a8" stroke-width="1.8"/><path d="M10 6h11M10 9h11M10 12h11M10 15h11M10 18h7" stroke="#8c8c8c" stroke-width="1.3"/></svg><svg style="left:317.0px;top:128.0px;" width="24" height="24" viewBox="0 0 24 24"><path d="M4 2h9l4 4v12h-13z" fill="#f6f6f6" stroke="#888" stroke-width="1"/><path d="M13 2v4h4" fill="none" stroke="#888" stroke-width="1"/><rect x="7" y="7.5" width="6" height="4.5" rx="1" fill="#4a68a8"/><path d="M5 8.5h2M5 11h2M13 9.8h3" stroke="#e05050" stroke-width="1.2"/><path d="M10 17c1 3 5 4.5 9 2.5l.500 2 2.5-4.5-4.5-1 .500 1.8c-3 1-5.5 0-6.5-1.5z" fill="#9cb8e0" stroke="#4a78b8" stroke-width="0.7"/></svg><svg style="left:357.0px;top:128.0px;" width="24" height="24" viewBox="0 0 24 24"><path d="M3 2h8l4 4v12h-12z" fill="#f8f8f8" stroke="#888" stroke-width="1"/><path d="M11 2v4h4" fill="none" stroke="#888" stroke-width="1"/><path d="M5.5 8h7M5.5 10.5h7M5.5 13h5" stroke="#b8b8b8" stroke-width="0.9"/><path d="M8.5 21l1-3.5 8.5-8.5 2.5 2.5-8.5 8.5z" fill="#f6c84a" stroke="#a8781c" stroke-width="0.8"/><path d="M18 9l2.5 2.5" stroke="#d84848" stroke-width="2.4"/><path d="M8.5 21l1-3 2 2z" fill="#222"/></svg><svg style="left:398.0px;top:128.0px;" width="24" height="24" viewBox="0 0 24 24"><rect x="1" y="1" width="22" height="23" fill="#fff"/><path d="M1 4.5h22M1 8.5h22M1 12.5h22M1 16.5h22M1 20.5h22M4.5 1v23M8.5 1v23M12.5 1v23M16.5 1v23M20.5 1v23" stroke="#a0a0a0" stroke-width="0.7"/><path d="M9 6v-2.5h5v8h6" fill="none" stroke="#777" stroke-width="1.8"/><rect x="18" y="10" width="3" height="3" fill="#c05050"/><path d="M2.5 22.5l2-10 2.8 3 6-5 2 2.4-6 5 3.2 2.6z" fill="#fff" stroke="#222" stroke-width="1"/></svg><svg style="left:475.0px;top:128.0px;" width="24" height="24" viewBox="0 0 24 24"><path d="M4 3h5l4 4v8h-9z" fill="#f6f6f6" stroke="#999" stroke-width="1"/><path d="M9 3v4h4" fill="none" stroke="#999" stroke-width="1"/><path d="M6 21l7-7" stroke="#e8902c" stroke-width="2.8" stroke-linecap="round"/><circle cx="17" cy="10" r="3.5" fill="#dfe8f6" stroke="#7a9ad0" stroke-width="1"/><path d="M17 8v2h1.8" stroke="#4a68a8" stroke-width="0.9" fill="none"/></svg><svg style="left:507.0px;top:128.0px;" width="24" height="24" viewBox="0 0 24 24"><path d="M3.5 3.5h17v12h-12l-4.5 4 1-4h-1.5z" fill="#f0f0f0" stroke="#8a8a8a" stroke-width="1.2"/><rect x="4" y="4" width="16" height="2.4" fill="#8a9ab8"/><path d="M6.5 9h11M6.5 11.5h11M6.5 14h8" stroke="#a8a8a8" stroke-width="0.9"/></svg><svg style="left:346px;top:138.5px;" width="9" height="6" viewBox="0 0 9 6"><path d="M0 0h8L4 4.5z" fill="#b4000c"/></svg><svg style="left:387px;top:138.5px;" width="9" height="6" viewBox="0 0 9 6"><path d="M0 0h8L4 4.5z" fill="#b4000c"/></svg><svg style="left:429px;top:138.5px;" width="9" height="6" viewBox="0 0 9 6"><path d="M0 0h8L4 4.5z" fill="#b4000c"/></svg><span class="t" style="left:534px;top:134.52px;font-size:11.2px;line-height:11.2px;color:#000;">Sim Time</span><div style="left:584px;top:130px;width:38px;height:21px;background:#fff;border-radius:3px;box-shadow:inset 0 0 0 1px #d0d0d0;"></div><div style="left:1px;top:156px;width:184px;height:305px;background:#f0f0f0;"></div><div style="left:2px;top:155.5px;width:182px;height:19px;background:linear-gradient(#f4f4f4,#dedede 45%,#bababa);box-shadow:inset 0 0 0 1px #888, inset 1px 1px 0 #555;"></div><span class="t" style="left:14px;top:160.02px;font-size:11.2px;line-height:11.2px;color:#000;font-weight:700;">Navigator</span><div style="left:140px;top:158px;width:13px;height:14px;background:linear-gradient(#fdfdfd,#dcdcdc);border-radius:3px;box-shadow:inset 0 0 0 1px #a8a8a8;"></div><div style="left:155px;top:158px;width:13px;height:14px;background:linear-gradient(#fdfdfd,#dcdcdc);border-radius:3px;box-shadow:inset 0 0 0 1px #a8a8a8;"></div><div style="left:170px;top:158px;width:13px;height:14px;background:linear-gradient(#fdfdfd,#dcdcdc);border-radius:3px;box-shadow:inset 0 0 0 1px #a8a8a8;"></div><span class="t" style="left:143.5px;top:159.77px;font-size:11.5px;line-height:11.5px;color:#000;font-weight:700;">?</span><svg style="left:157px;top:160px;" width="10" height="10" viewBox="0 0 10 10"><rect x="3.5" y="1" width="5.5" height="4.5" fill="none" stroke="#000" stroke-width="1.3"/><rect x="1" y="4.5" width="5.5" height="4.5" fill="#eee" stroke="#000" stroke-width="1.3"/></svg><svg style="left:172px;top:160px;" width="10" height="10" viewBox="0 0 10 10"><path d="M1.5 1.5l7 7M8.5 1.5l-7 7" stroke="#000" stroke-width="1.6"/></svg><span class="t" style="left:-59px;width:300px;text-align:center;top:178.89px;font-size:12.3px;line-height:12.3px;color:#000;-webkit-text-stroke:0.25px #000;">Schematic</span><span class="t" style="left:-58px;width:300px;text-align:center;top:193.58px;font-size:10.3px;line-height:10.3px;color:#000;">nand2_sim</span><div style="left:2px;top:208px;width:182px;height:1px;background:#c4c4c4;"></div><svg style="left:2.5px;top:217.0px;" width="9" height="6" viewBox="0 0 9 6"><path d="M0 0.3h8.4L4.2 5.3z" fill="#b0000c"/></svg><span class="t" style="left:14px;top:214.52px;font-size:11.2px;line-height:11.2px;color:#000;font-weight:700;transform:scaleX(0.87);transform-origin:0 0;">OBJECTS</span><span class="t" style="left:13.4px;top:231.52px;font-size:11.2px;line-height:11.2px;color:#000;">All</span><svg style="left:174px;top:232.5px;" width="7" height="8" viewBox="0 0 7 8"><path d="M0.3 0.3v7l5.7-3.5z" fill="#a0a0a0"/></svg><span class="t" style="left:13.4px;top:249.52px;font-size:11.2px;line-height:11.2px;color:#000;">Instances</span><span class="t" style="right:1116px;top:248.52px;font-size:11.2px;line-height:11.2px;color:#000;text-align:right;">6</span><svg style="left:174px;top:250.5px;" width="7" height="8" viewBox="0 0 7 8"><path d="M0.3 0.3v7l5.7-3.5z" fill="#a0a0a0"/></svg><span class="t" style="left:13.4px;top:267.52px;font-size:11.2px;line-height:11.2px;color:#000;">Nets</span><span class="t" style="right:1116px;top:266.52px;font-size:11.2px;line-height:11.2px;color:#000;text-align:right;">5</span><svg style="left:174px;top:268.5px;" width="7" height="8" viewBox="0 0 7 8"><path d="M0.3 0.3v7l5.7-3.5z" fill="#a0a0a0"/></svg><span class="t" style="left:13.4px;top:285.52px;font-size:11.2px;line-height:11.2px;color:#000;">Pins</span><span class="t" style="right:1116px;top:284.52px;font-size:11.2px;line-height:11.2px;color:#000;text-align:right;">1</span><svg style="left:174px;top:286.5px;" width="7" height="8" viewBox="0 0 7 8"><path d="M0.3 0.3v7l5.7-3.5z" fill="#a0a0a0"/></svg><span class="t" style="left:13.4px;top:303.52px;font-size:11.2px;line-height:11.2px;color:#000;">Nets and Pins</span><svg style="left:174px;top:304.5px;" width="7" height="8" viewBox="0 0 7 8"><path d="M0.3 0.3v7l5.7-3.5z" fill="#a0a0a0"/></svg><svg style="left:2.5px;top:330.0px;" width="9" height="6" viewBox="0 0 9 6"><path d="M0 0.3h8.4L4.2 5.3z" fill="#b0000c"/></svg><span class="t" style="left:14px;top:327.52px;font-size:11.2px;line-height:11.2px;color:#000;font-weight:700;transform:scaleX(0.87);transform-origin:0 0;">GROUPS</span><span class="t" style="left:13.4px;top:344.52px;font-size:11.2px;line-height:11.2px;color:#000;">Cells</span><svg style="left:174px;top:345.5px;" width="7" height="8" viewBox="0 0 7 8"><path d="M0.3 0.3v7l5.7-3.5z" fill="#a0a0a0"/></svg><span class="t" style="left:13.4px;top:362.52px;font-size:11.2px;line-height:11.2px;color:#000;">Types</span><svg style="left:174px;top:363.5px;" width="7" height="8" viewBox="0 0 7 8"><path d="M0.3 0.3v7l5.7-3.5z" fill="#a0a0a0"/></svg><div style="left:7px;top:449px;width:9px;height:1.4px;background:#444;"></div><div style="left:10.8px;top:445.2px;width:1.4px;height:9px;background:#444;"></div><div style="left:27px;top:449px;width:9px;height:1.4px;background:#bcbcbc;"></div><div style="left:168px;top:444px;width:9px;height:11px;border:1.5px solid #555;border-radius:1.5px;box-sizing:border-box;"></div><div style="left:172px;top:445px;width:1.2px;height:9px;background:#555;"></div><div style="left:2px;top:459px;width:182px;height:3px;background:#d4d4d4;"></div><div style="left:185px;top:156px;width:5px;height:503px;background:#cfcfcf;"></div><div style="left:1px;top:462px;width:184px;height:197px;background:#f0f0f0;"></div><div style="left:2px;top:466.5px;width:182px;height:19px;background:linear-gradient(#f4f4f4,#dedede 45%,#bababa);box-shadow:inset 0 0 0 1px #888, inset 1px 1px 0 #555;"></div><span class="t" style="left:14px;top:471.02px;font-size:11.2px;line-height:11.2px;color:#000;font-weight:700;">Property Editor</span><div style="left:140px;top:469px;width:13px;height:14px;background:linear-gradient(#fdfdfd,#dcdcdc);border-radius:3px;box-shadow:inset 0 0 0 1px #a8a8a8;"></div><div style="left:155px;top:469px;width:13px;height:14px;background:linear-gradient(#fdfdfd,#dcdcdc);border-radius:3px;box-shadow:inset 0 0 0 1px #a8a8a8;"></div><div style="left:170px;top:469px;width:13px;height:14px;background:linear-gradient(#fdfdfd,#dcdcdc);border-radius:3px;box-shadow:inset 0 0 0 1px #a8a8a8;"></div><span class="t" style="left:143.5px;top:470.77px;font-size:11.5px;line-height:11.5px;color:#000;font-weight:700;">?</span><svg style="left:157px;top:471px;" width="10" height="10" viewBox="0 0 10 10"><rect x="3.5" y="1" width="5.5" height="4.5" fill="none" stroke="#000" stroke-width="1.3"/><rect x="1" y="4.5" width="5.5" height="4.5" fill="#eee" stroke="#000" stroke-width="1.3"/></svg><svg style="left:172px;top:471px;" width="10" height="10" viewBox="0 0 10 10"><path d="M1.5 1.5l7 7M8.5 1.5l-7 7" stroke="#000" stroke-width="1.6"/></svg><div style="left:5px;top:489px;width:175px;height:166px;background:#fff;box-shadow:inset 1.5px 1.5px 0 #2a2a2a, inset -1px -1px 0 #e4e4e4;"></div><div style="left:7px;top:638px;width:172px;height:16px;background:#9f9f9f;"></div><div style="left:7px;top:638px;width:15px;height:16px;background:#f2f2f2;box-shadow:inset 0 -1px 0 #999;"></div><svg style="left:10px;top:641px;" width="8" height="10" viewBox="0 0 8 10"><path d="M7 1L1.5 5 7 9" fill="#fafafa" stroke="#c4c4c4" stroke-width="1"/></svg><div style="left:164px;top:638px;width:15px;height:16px;background:#f2f2f2;box-shadow:inset 0 -1px 0 #999;"></div><svg style="left:167px;top:641px;" width="8" height="10" viewBox="0 0 8 10"><path d="M1 1l5.5 4L1 9" fill="#fafafa" stroke="#c4c4c4" stroke-width="1"/></svg><div style="left:22px;top:638px;width:121px;height:16px;background:linear-gradient(#e0e0e0,#c8c8c8);border-radius:8px;box-shadow:inset 0 0 0 1px #b4b4b4;"></div><div style="left:78px;top:643px;width:1px;height:6px;background:#8a8a8a;"></div><div style="left:80px;top:643px;width:1px;height:6px;background:#8a8a8a;"></div><div style="left:82px;top:643px;width:1px;height:6px;background:#8a8a8a;"></div><div style="left:84px;top:643px;width:1px;height:6px;background:#8a8a8a;"></div><div style="left:86px;top:643px;width:1px;height:6px;background:#8a8a8a;"></div><svg style="left:190px;top:157px;" width="1089" height="502" viewBox="190 157 1089 502" font-family="'DejaVu Sans Light','DejaVu Sans',sans-serif" font-weight="200"><rect x="190" y="157" width="1089" height="502" fill="#000"/><path d="M209 170h1v1h-1zM241 170h1v1h-1zM272 170h1v1h-1zM304 170h1v1h-1zM336 170h1v1h-1zM367 170h1v1h-1zM399 170h1v1h-1zM431 170h1v1h-1zM462 170h1v1h-1zM494 170h1v1h-1zM526 170h1v1h-1zM557 170h1v1h-1zM589 170h1v1h-1zM621 170h1v1h-1zM652 170h1v1h-1zM684 170h1v1h-1zM716 170h1v1h-1zM747 170h1v1h-1zM779 170h1v1h-1zM811 170h1v1h-1zM842 170h1v1h-1zM874 170h1v1h-1zM906 170h1v1h-1zM937 170h1v1h-1zM969 170h1v1h-1zM1001 170h1v1h-1zM1032 170h1v1h-1zM1064 170h1v1h-1zM1096 170h1v1h-1zM1127 170h1v1h-1zM1159 170h1v1h-1zM1191 170h1v1h-1zM1222 170h1v1h-1zM1254 170h1v1h-1zM209 201h1v1h-1zM241 201h1v1h-1zM272 201h1v1h-1zM304 201h1v1h-1zM336 201h1v1h-1zM367 201h1v1h-1zM399 201h1v1h-1zM431 201h1v1h-1zM462 201h1v1h-1zM494 201h1v1h-1zM526 201h1v1h-1zM557 201h1v1h-1zM589 201h1v1h-1zM621 201h1v1h-1zM652 201h1v1h-1zM684 201h1v1h-1zM716 201h1v1h-1zM747 201h1v1h-1zM779 201h1v1h-1zM811 201h1v1h-1zM842 201h1v1h-1zM874 201h1v1h-1zM906 201h1v1h-1zM937 201h1v1h-1zM969 201h1v1h-1zM1001 201h1v1h-1zM1032 201h1v1h-1zM1064 201h1v1h-1zM1096 201h1v1h-1zM1127 201h1v1h-1zM1159 201h1v1h-1zM1191 201h1v1h-1zM1222 201h1v1h-1zM1254 201h1v1h-1zM209 233h1v1h-1zM241 233h1v1h-1zM272 233h1v1h-1zM304 233h1v1h-1zM336 233h1v1h-1zM367 233h1v1h-1zM399 233h1v1h-1zM431 233h1v1h-1zM462 233h1v1h-1zM494 233h1v1h-1zM526 233h1v1h-1zM557 233h1v1h-1zM589 233h1v1h-1zM621 233h1v1h-1zM652 233h1v1h-1zM684 233h1v1h-1zM716 233h1v1h-1zM747 233h1v1h-1zM779 233h1v1h-1zM811 233h1v1h-1zM842 233h1v1h-1zM874 233h1v1h-1zM906 233h1v1h-1zM937 233h1v1h-1zM969 233h1v1h-1zM1001 233h1v1h-1zM1032 233h1v1h-1zM1064 233h1v1h-1zM1096 233h1v1h-1zM1127 233h1v1h-1zM1159 233h1v1h-1zM1191 233h1v1h-1zM1222 233h1v1h-1zM1254 233h1v1h-1zM209 265h1v1h-1zM241 265h1v1h-1zM272 265h1v1h-1zM304 265h1v1h-1zM336 265h1v1h-1zM367 265h1v1h-1zM399 265h1v1h-1zM431 265h1v1h-1zM462 265h1v1h-1zM494 265h1v1h-1zM526 265h1v1h-1zM557 265h1v1h-1zM589 265h1v1h-1zM621 265h1v1h-1zM652 265h1v1h-1zM684 265h1v1h-1zM716 265h1v1h-1zM747 265h1v1h-1zM779 265h1v1h-1zM811 265h1v1h-1zM842 265h1v1h-1zM874 265h1v1h-1zM906 265h1v1h-1zM937 265h1v1h-1zM969 265h1v1h-1zM1001 265h1v1h-1zM1032 265h1v1h-1zM1064 265h1v1h-1zM1096 265h1v1h-1zM1127 265h1v1h-1zM1159 265h1v1h-1zM1191 265h1v1h-1zM1222 265h1v1h-1zM1254 265h1v1h-1zM209 296h1v1h-1zM241 296h1v1h-1zM272 296h1v1h-1zM304 296h1v1h-1zM336 296h1v1h-1zM367 296h1v1h-1zM399 296h1v1h-1zM431 296h1v1h-1zM462 296h1v1h-1zM494 296h1v1h-1zM526 296h1v1h-1zM557 296h1v1h-1zM589 296h1v1h-1zM621 296h1v1h-1zM652 296h1v1h-1zM684 296h1v1h-1zM716 296h1v1h-1zM747 296h1v1h-1zM779 296h1v1h-1zM811 296h1v1h-1zM842 296h1v1h-1zM874 296h1v1h-1zM906 296h1v1h-1zM937 296h1v1h-1zM969 296h1v1h-1zM1001 296h1v1h-1zM1032 296h1v1h-1zM1064 296h1v1h-1zM1096 296h1v1h-1zM1127 296h1v1h-1zM1159 296h1v1h-1zM1191 296h1v1h-1zM1222 296h1v1h-1zM1254 296h1v1h-1zM209 328h1v1h-1zM241 328h1v1h-1zM272 328h1v1h-1zM304 328h1v1h-1zM336 328h1v1h-1zM367 328h1v1h-1zM399 328h1v1h-1zM431 328h1v1h-1zM462 328h1v1h-1zM494 328h1v1h-1zM526 328h1v1h-1zM557 328h1v1h-1zM589 328h1v1h-1zM621 328h1v1h-1zM652 328h1v1h-1zM684 328h1v1h-1zM716 328h1v1h-1zM747 328h1v1h-1zM779 328h1v1h-1zM811 328h1v1h-1zM842 328h1v1h-1zM874 328h1v1h-1zM906 328h1v1h-1zM937 328h1v1h-1zM969 328h1v1h-1zM1001 328h1v1h-1zM1032 328h1v1h-1zM1064 328h1v1h-1zM1096 328h1v1h-1zM1127 328h1v1h-1zM1159 328h1v1h-1zM1191 328h1v1h-1zM1222 328h1v1h-1zM1254 328h1v1h-1zM209 360h1v1h-1zM241 360h1v1h-1zM272 360h1v1h-1zM304 360h1v1h-1zM336 360h1v1h-1zM367 360h1v1h-1zM399 360h1v1h-1zM431 360h1v1h-1zM462 360h1v1h-1zM494 360h1v1h-1zM526 360h1v1h-1zM557 360h1v1h-1zM589 360h1v1h-1zM621 360h1v1h-1zM652 360h1v1h-1zM684 360h1v1h-1zM716 360h1v1h-1zM747 360h1v1h-1zM779 360h1v1h-1zM811 360h1v1h-1zM842 360h1v1h-1zM874 360h1v1h-1zM906 360h1v1h-1zM937 360h1v1h-1zM969 360h1v1h-1zM1001 360h1v1h-1zM1032 360h1v1h-1zM1064 360h1v1h-1zM1096 360h1v1h-1zM1127 360h1v1h-1zM1159 360h1v1h-1zM1191 360h1v1h-1zM1222 360h1v1h-1zM1254 360h1v1h-1zM209 391h1v1h-1zM241 391h1v1h-1zM272 391h1v1h-1zM304 391h1v1h-1zM336 391h1v1h-1zM367 391h1v1h-1zM399 391h1v1h-1zM431 391h1v1h-1zM462 391h1v1h-1zM494 391h1v1h-1zM526 391h1v1h-1zM557 391h1v1h-1zM589 391h1v1h-1zM621 391h1v1h-1zM652 391h1v1h-1zM684 391h1v1h-1zM716 391h1v1h-1zM747 391h1v1h-1zM779 391h1v1h-1zM811 391h1v1h-1zM842 391h1v1h-1zM874 391h1v1h-1zM906 391h1v1h-1zM937 391h1v1h-1zM969 391h1v1h-1zM1001 391h1v1h-1zM1032 391h1v1h-1zM1064 391h1v1h-1zM1096 391h1v1h-1zM1127 391h1v1h-1zM1159 391h1v1h-1zM1191 391h1v1h-1zM1222 391h1v1h-1zM1254 391h1v1h-1zM209 423h1v1h-1zM241 423h1v1h-1zM272 423h1v1h-1zM304 423h1v1h-1zM336 423h1v1h-1zM367 423h1v1h-1zM399 423h1v1h-1zM431 423h1v1h-1zM462 423h1v1h-1zM494 423h1v1h-1zM526 423h1v1h-1zM557 423h1v1h-1zM589 423h1v1h-1zM621 423h1v1h-1zM652 423h1v1h-1zM684 423h1v1h-1zM716 423h1v1h-1zM747 423h1v1h-1zM779 423h1v1h-1zM811 423h1v1h-1zM842 423h1v1h-1zM874 423h1v1h-1zM906 423h1v1h-1zM937 423h1v1h-1zM969 423h1v1h-1zM1001 423h1v1h-1zM1032 423h1v1h-1zM1064 423h1v1h-1zM1096 423h1v1h-1zM1127 423h1v1h-1zM1159 423h1v1h-1zM1191 423h1v1h-1zM1222 423h1v1h-1zM1254 423h1v1h-1zM209 455h1v1h-1zM241 455h1v1h-1zM272 455h1v1h-1zM304 455h1v1h-1zM336 455h1v1h-1zM367 455h1v1h-1zM399 455h1v1h-1zM431 455h1v1h-1zM462 455h1v1h-1zM494 455h1v1h-1zM526 455h1v1h-1zM557 455h1v1h-1zM589 455h1v1h-1zM621 455h1v1h-1zM652 455h1v1h-1zM684 455h1v1h-1zM716 455h1v1h-1zM747 455h1v1h-1zM779 455h1v1h-1zM811 455h1v1h-1zM842 455h1v1h-1zM874 455h1v1h-1zM906 455h1v1h-1zM937 455h1v1h-1zM969 455h1v1h-1zM1001 455h1v1h-1zM1032 455h1v1h-1zM1064 455h1v1h-1zM1096 455h1v1h-1zM1127 455h1v1h-1zM1159 455h1v1h-1zM1191 455h1v1h-1zM1222 455h1v1h-1zM1254 455h1v1h-1zM209 486h1v1h-1zM241 486h1v1h-1zM272 486h1v1h-1zM304 486h1v1h-1zM336 486h1v1h-1zM367 486h1v1h-1zM399 486h1v1h-1zM431 486h1v1h-1zM462 486h1v1h-1zM494 486h1v1h-1zM526 486h1v1h-1zM557 486h1v1h-1zM589 486h1v1h-1zM621 486h1v1h-1zM652 486h1v1h-1zM684 486h1v1h-1zM716 486h1v1h-1zM747 486h1v1h-1zM779 486h1v1h-1zM811 486h1v1h-1zM842 486h1v1h-1zM874 486h1v1h-1zM906 486h1v1h-1zM937 486h1v1h-1zM969 486h1v1h-1zM1001 486h1v1h-1zM1032 486h1v1h-1zM1064 486h1v1h-1zM1096 486h1v1h-1zM1127 486h1v1h-1zM1159 486h1v1h-1zM1191 486h1v1h-1zM1222 486h1v1h-1zM1254 486h1v1h-1zM209 518h1v1h-1zM241 518h1v1h-1zM272 518h1v1h-1zM304 518h1v1h-1zM336 518h1v1h-1zM367 518h1v1h-1zM399 518h1v1h-1zM431 518h1v1h-1zM462 518h1v1h-1zM494 518h1v1h-1zM526 518h1v1h-1zM557 518h1v1h-1zM589 518h1v1h-1zM621 518h1v1h-1zM652 518h1v1h-1zM684 518h1v1h-1zM716 518h1v1h-1zM747 518h1v1h-1zM779 518h1v1h-1zM811 518h1v1h-1zM842 518h1v1h-1zM874 518h1v1h-1zM906 518h1v1h-1zM937 518h1v1h-1zM969 518h1v1h-1zM1001 518h1v1h-1zM1032 518h1v1h-1zM1064 518h1v1h-1zM1096 518h1v1h-1zM1127 518h1v1h-1zM1159 518h1v1h-1zM1191 518h1v1h-1zM1222 518h1v1h-1zM1254 518h1v1h-1zM209 550h1v1h-1zM241 550h1v1h-1zM272 550h1v1h-1zM304 550h1v1h-1zM336 550h1v1h-1zM367 550h1v1h-1zM399 550h1v1h-1zM431 550h1v1h-1zM462 550h1v1h-1zM494 550h1v1h-1zM526 550h1v1h-1zM557 550h1v1h-1zM589 550h1v1h-1zM621 550h1v1h-1zM652 550h1v1h-1zM684 550h1v1h-1zM716 550h1v1h-1zM747 550h1v1h-1zM779 550h1v1h-1zM811 550h1v1h-1zM842 550h1v1h-1zM874 550h1v1h-1zM906 550h1v1h-1zM937 550h1v1h-1zM969 550h1v1h-1zM1001 550h1v1h-1zM1032 550h1v1h-1zM1064 550h1v1h-1zM1096 550h1v1h-1zM1127 550h1v1h-1zM1159 550h1v1h-1zM1191 550h1v1h-1zM1222 550h1v1h-1zM1254 550h1v1h-1zM209 581h1v1h-1zM241 581h1v1h-1zM272 581h1v1h-1zM304 581h1v1h-1zM336 581h1v1h-1zM367 581h1v1h-1zM399 581h1v1h-1zM431 581h1v1h-1zM462 581h1v1h-1zM494 581h1v1h-1zM526 581h1v1h-1zM557 581h1v1h-1zM589 581h1v1h-1zM621 581h1v1h-1zM652 581h1v1h-1zM684 581h1v1h-1zM716 581h1v1h-1zM747 581h1v1h-1zM779 581h1v1h-1zM811 581h1v1h-1zM842 581h1v1h-1zM874 581h1v1h-1zM906 581h1v1h-1zM937 581h1v1h-1zM969 581h1v1h-1zM1001 581h1v1h-1zM1032 581h1v1h-1zM1064 581h1v1h-1zM1096 581h1v1h-1zM1127 581h1v1h-1zM1159 581h1v1h-1zM1191 581h1v1h-1zM1222 581h1v1h-1zM1254 581h1v1h-1zM209 613h1v1h-1zM241 613h1v1h-1zM272 613h1v1h-1zM304 613h1v1h-1zM336 613h1v1h-1zM367 613h1v1h-1zM399 613h1v1h-1zM431 613h1v1h-1zM462 613h1v1h-1zM494 613h1v1h-1zM526 613h1v1h-1zM557 613h1v1h-1zM589 613h1v1h-1zM621 613h1v1h-1zM652 613h1v1h-1zM684 613h1v1h-1zM716 613h1v1h-1zM747 613h1v1h-1zM779 613h1v1h-1zM811 613h1v1h-1zM842 613h1v1h-1zM874 613h1v1h-1zM906 613h1v1h-1zM937 613h1v1h-1zM969 613h1v1h-1zM1001 613h1v1h-1zM1032 613h1v1h-1zM1064 613h1v1h-1zM1096 613h1v1h-1zM1127 613h1v1h-1zM1159 613h1v1h-1zM1191 613h1v1h-1zM1222 613h1v1h-1zM1254 613h1v1h-1zM209 645h1v1h-1zM241 645h1v1h-1zM272 645h1v1h-1zM304 645h1v1h-1zM336 645h1v1h-1zM367 645h1v1h-1zM399 645h1v1h-1zM431 645h1v1h-1zM462 645h1v1h-1zM494 645h1v1h-1zM526 645h1v1h-1zM557 645h1v1h-1zM589 645h1v1h-1zM621 645h1v1h-1zM652 645h1v1h-1zM684 645h1v1h-1zM716 645h1v1h-1zM747 645h1v1h-1zM779 645h1v1h-1zM811 645h1v1h-1zM842 645h1v1h-1zM874 645h1v1h-1zM906 645h1v1h-1zM937 645h1v1h-1zM969 645h1v1h-1zM1001 645h1v1h-1zM1032 645h1v1h-1zM1064 645h1v1h-1zM1096 645h1v1h-1zM1127 645h1v1h-1zM1159 645h1v1h-1zM1191 645h1v1h-1zM1222 645h1v1h-1zM1254 645h1v1h-1z" fill="#8a8a8a" shape-rendering="crispEdges"/><path d="M399 390h1v1h1v1h-1v1h-1v-1h-1v-1h1zM652 390h1v1h1v1h-1v1h-1v-1h-1v-1h1zM906 390h1v1h1v1h-1v1h-1v-1h-1v-1h1zM1159 390h1v1h1v1h-1v1h-1v-1h-1v-1h1zM399 644h1v1h1v1h-1v1h-1v-1h-1v-1h1zM652 644h1v1h1v1h-1v1h-1v-1h-1v-1h1zM906 644h1v1h1v1h-1v1h-1v-1h-1v-1h1zM1159 644h1v1h1v1h-1v1h-1v-1h-1v-1h1z" fill="#fff" shape-rendering="crispEdges"/><path d="M249 249.5H329 M288.5 249V306 M660 296.5H716 M660 391.5H716 M716.5 265V424 M716 265.5H843 M716 423.5H843 M938 344.5H995 M431.5 430V455 M431.5 487V512 M431.5 557V597 M415.5 597.5H447.5L431.5 613.5Z M426.5 463.5H436.5 M431.5 458.5V468 M426.5 478.5H436.5 M382.0 475.5H386.5V466.5H393.5V475.5H399.5V466.5H405.5V475.5H411.0 M557.5 430V455 M557.5 487V512 M557.5 557V597 M541.5 597.5H573.5L557.5 613.5Z M552.5 463.5H562.5 M557.5 458.5V468 M552.5 478.5H562.5 M508.0 475.5H512.5V466.5H519.5V475.5H525.5V466.5H531.5V475.5H537.0" fill="none" stroke="#40c080" stroke-width="1" shape-rendering="crispEdges"/><path d="M843 265.5H844.3A60.5 79 0 0 1 844.3 423.5H843" fill="none" stroke="#40c080" stroke-width="1.1"/><circle cx="921.8" cy="344.5" r="16.1" fill="none" stroke="#40c080" stroke-width="1.1"/><ellipse cx="431.2" cy="470.9" rx="18" ry="15.7" fill="none" stroke="#40c080" stroke-width="1.1"/><ellipse cx="557.2" cy="470.9" rx="18" ry="15.7" fill="none" stroke="#40c080" stroke-width="1.1"/><path d="M430 296.5H646 M431.5 295V417 M556 391.5H646 M557.5 390V417 M1008 344.5H1095 M431.5 525V543 M557.5 525V543" fill="none" stroke="#0404e6" stroke-width="3" shape-rendering="crispEdges"/><rect x="282" y="306" width="14" height="14" fill="#ff0000"/><rect x="646" y="290" width="14" height="14" fill="#ff0000"/><rect x="646" y="385" width="14" height="14" fill="#ff0000"/><rect x="994" y="338" width="14" height="14" fill="#ff0000"/><rect x="424" y="512" width="14" height="14" fill="#ff0000"/><rect x="550" y="512" width="14" height="14" fill="#ff0000"/><rect x="424" y="543" width="14" height="14" fill="#ff0000"/><rect x="550" y="543" width="14" height="14" fill="#ff0000"/><rect x="424" y="417" width="14" height="13" fill="#ff0000"/><rect x="550" y="417" width="14" height="13" fill="#ff0000"/><path d="M1094.5 330H1112L1127.5 344.5L1112 358.5H1094.5Z" fill="#ff0000"/><text x="304.5" y="281.8" font-size="14.8" fill="#f03434" letter-spacing="0.7">vdd</text><text x="533" y="286" font-size="21" fill="#64a8ec">A</text><text x="597.5" y="381" font-size="21" fill="#64a8ec">B</text><text x="739" y="335.3" font-size="22.4" fill="#f2f2f2" letter-spacing="0.45">6um/600nm</text><text x="739" y="360.8" font-size="22.4" fill="#f2f2f2" letter-spacing="-0.2">MIL</text><text x="1003" y="334" font-size="23.6" fill="#64a8ec" letter-spacing="-0.25">AnandB</text><text x="1135" y="353" font-size="23.6" fill="#f03434" letter-spacing="-0.4">AnandB</text><text x="410" y="440" font-size="19" fill="#f8e6c4">A</text><text x="446.5" y="440" font-size="19" fill="#f03434" letter-spacing="0.3">V0</text><text x="455.5" y="463.7" font-size="18.5" fill="#ec9648" letter-spacing="-0.5">v1:0</text><text x="455.5" y="487" font-size="18.5" fill="#ec9648" letter-spacing="-0.1">v2=5</text><text x="455.5" y="510.5" font-size="18.5" fill="#ec9648" letter-spacing="-0.5">tr=1p</text><text x="381" y="517.5" font-size="17.5" fill="#f8e6c4" letter-spacing="0.4">gnd!</text><text x="447.5" y="582" font-size="15.5" fill="#f03434" letter-spacing="0.1">gnd</text><text x="536" y="440" font-size="19" fill="#f8e6c4">B</text><text x="572.5" y="440" font-size="19" fill="#f03434" letter-spacing="0.3">V1</text><text x="581.5" y="463.7" font-size="18.5" fill="#ec9648" letter-spacing="-0.5">v1:0</text><text x="581.5" y="487" font-size="18.5" fill="#ec9648" letter-spacing="-0.1">v2=5</text><text x="581.5" y="510.5" font-size="18.5" fill="#ec9648" letter-spacing="-0.5">tr=1p</text><text x="507" y="517.5" font-size="17.5" fill="#f8e6c4" letter-spacing="0.4">gnd!</text><text x="573.5" y="582" font-size="15.5" fill="#f03434" letter-spacing="0.1">gnd</text></svg><div style="left:1px;top:659px;width:1277px;height:18px;background:linear-gradient(#f2f2f2,#e3e3e3 45%,#c1c1c1);border-radius:0 0 5px 5px;box-shadow:inset -1px -1px 0 #b0b0b0;"></div><div style="left:4px;top:663px;width:1px;height:9px;background:#a8a8a8;"></div><div style="left:6px;top:663px;width:1px;height:9px;background:#a8a8a8;"></div><div style="left:8px;top:663px;width:1px;height:9px;background:#a8a8a8;"></div><span class="t" style="left:10.3px;top:661.52px;font-size:11.2px;line-height:11.2px;color:#000;">mouse L: showClickInfo()</span><span class="t" style="left:492px;width:300px;text-align:center;top:661.52px;font-size:11.2px;line-height:11.2px;color:#000;">M: schHiMousePopUp()</span><span class="t" style="right:7.5px;top:661.52px;font-size:11.2px;line-height:11.2px;color:#000;text-align:right;">R: schHiMousePopUp()</span><div style="left:1px;top:677px;width:1277px;height:21px;background:#f1f1f1;"></div><span class="t" style="left:3px;top:683.92px;font-size:11.2px;line-height:11.2px;color:#000;">28(50)</span><div style="left:41px;top:680px;width:1px;height:17px;background:#6a6a6a;"></div><span class="t" style="left:51px;top:683.92px;font-size:11.2px;line-height:11.2px;color:#000;">Zoom In</span><div style="left:807px;top:680px;width:1px;height:17px;background:#6a6a6a;"></div><div style="left:983px;top:680px;width:1px;height:17px;background:#6a6a6a;"></div><div style="left:1033px;top:680px;width:1px;height:17px;background:#6a6a6a;"></div><div style="left:1143px;top:680px;width:1px;height:17px;background:#6a6a6a;"></div><span class="t" style="left:814px;top:683.92px;font-size:11.2px;line-height:11.2px;color:#000;">Cmd:</span><span class="t" style="left:848px;top:683.92px;font-size:11.2px;line-height:11.2px;color:#000;">Sel: 0</span><span class="t" style="left:904px;top:683.92px;font-size:11.2px;line-height:11.2px;color:#000;">Status: Ready</span><span class="t" style="left:990px;top:683.92px;font-size:11.2px;line-height:11.2px;color:#000;">T=27 C</span><span class="t" style="left:1040px;top:683.92px;font-size:11.2px;line-height:11.2px;color:#000;">Simulator: spectre</span><span class="t" style="left:1151px;top:683.92px;font-size:11.2px;line-height:11.2px;color:#000;">State: spectre_state1</span><div style="left:1267px;top:681px;width:9px;height:15px;background:#8e8e8e;box-shadow:inset 1px 1px 0 #555, 1px 1px 0 #fff;"></div><div style="left:0px;top:698px;width:1279px;height:2px;background:#222;"></div><div style="left:13px;top:698px;width:47px;height:2px;background:#5a4048;"></div><div style="left:17px;top:698px;width:3px;height:1px;background:#8a7a40;"></div><div style="left:31px;top:698px;width:12px;height:1px;background:#8a7a40;"></div><div style="left:0px;top:0px;width:1px;height:700px;background:#1c1c1c;"></div><div style="left:1278px;top:659px;width:1px;height:41px;background:#444;"></div><div style="left:0px;top:700px;width:1279px;height:1px;background:#1c1c1c;"></div><div style="left:1px;top:701px;width:1278px;height:30px;background:#fff;"></div><svg style="left:10px;top:707px;" width="14" height="15" viewBox="0 0 14 15"><rect x="0" y="1" width="14" height="13" fill="#b4bce4"/><path d="M0 0.5h14M0 14.5h14" stroke="#555" stroke-width="1"/><path d="M0.5 7c1-6 2.5-6 3.5 0s2.5 6 3.5 0s2.5-6 3.5 0s2 6 2.5 0" fill="none" stroke="#3a3a8c" stroke-width="1.2"/><path d="M0.5 8c1-5 2.5-5 3.5 1s2.5 4 3.5-2s2.5-4 3.5 2s2 4 2.5-1" fill="none" stroke="#c03050" stroke-width="0.9"/><path d="M6.5 0v15" stroke="#333" stroke-width="1.2"/></svg><span class="t" style="left:30px;top:710.14px;font-size:12px;line-height:12px;color:#979797;letter-spacing:0;">Virtuoso (R) Visualization &amp; Analysis XL</span><div style="left:1160px;top:715px;width:11px;height:1px;background:#868686;"></div><div style="left:1205px;top:710px;width:9px;height:9px;border:1px solid #7c7c7c;"></div><svg style="left:1250px;top:709px;" width="12" height="12" viewBox="0 0 12 12"><path d="M1 1l10 10M11 1l-10 10" stroke="#7a7a7a" stroke-width="1"/></svg><div style="left:1px;top:731px;width:1278px;height:24px;background:#f0f0f0;"></div><span class="t" style="left:10px;top:738.52px;font-size:11.2px;line-height:11.2px;color:#000;"><u>F</u>ile</span><span class="t" style="left:40px;top:738.52px;font-size:11.2px;line-height:11.2px;color:#000;"><u>E</u>dit</span><span class="t" style="left:72px;top:738.52px;font-size:11.2px;line-height:11.2px;color:#000;"><u>V</u>iew</span><span class="t" style="left:109px;top:738.52px;font-size:11.2px;line-height:11.2px;color:#000;"><u>G</u>raph</span><span class="t" style="left:154px;top:738.52px;font-size:11.2px;line-height:11.2px;color:#000;"><u>A</u>xis</span><span class="t" style="left:187px;top:738.52px;font-size:11.2px;line-height:11.2px;color:#000;"><u>T</u>race</span><span class="t" style="left:228px;top:738.52px;font-size:11.2px;line-height:11.2px;color:#000;"><u>M</u>arker</span><span class="t" style="left:278px;top:738.52px;font-size:11.2px;line-height:11.2px;color:#000;">M<u>e</u>asurements</span><span class="t" style="left:368px;top:738.52px;font-size:11.2px;line-height:11.2px;color:#000;">T<u>o</u>ols</span><span class="t" style="left:408px;top:738.52px;font-size:11.2px;line-height:11.2px;color:#000;"><u>W</u>indow</span><span class="t" style="left:462px;top:738.52px;font-size:11.2px;line-height:11.2px;color:#000;"><u>B</u>rowser</span><span class="t" style="left:517px;top:738.52px;font-size:11.2px;line-height:11.2px;color:#000;"><u>H</u>elp</span><span class="t" style="left:1199px;top:736.69px;font-size:17.5px;line-height:17.5px;color:#2a2a2a;font-weight:700;letter-spacing:4.5px;transform:scaleX(0.74);transform-origin:0 0;-webkit-text-stroke:0.35px #2a2a2a;">cadence</span><div style="left:1210px;top:737px;width:6px;height:1px;background:#c4001a;"></div><div style="left:1px;top:755px;width:1278px;height:3px;background:#c00414;"></div><div style="left:1px;top:758px;width:1278px;height:1px;background:#e08a92;"></div><div style="left:1px;top:762.5px;width:213px;height:30px;background:linear-gradient(#eeeeee 0%,#e6e6e6 14%,#d8d8d8 48%,#c3c3c3 85%,#b9b9b9 100%);border-radius:0 0 4px 4px;box-shadow:inset -1px -1px 0 #a4a4a4, inset 1px 0 0 #f4f4f4;"></div><div style="left:216px;top:762.5px;width:192px;height:30px;background:linear-gradient(#eeeeee 0%,#e6e6e6 14%,#d8d8d8 48%,#c3c3c3 85%,#b9b9b9 100%);border-radius:0 0 4px 4px;box-shadow:inset -1px -1px 0 #a4a4a4, inset 1px 0 0 #f4f4f4;"></div><div style="left:410px;top:762.5px;width:316px;height:30px;background:linear-gradient(#eeeeee 0%,#e6e6e6 14%,#d8d8d8 48%,#c3c3c3 85%,#b9b9b9 100%);border-radius:0 0 4px 4px;box-shadow:inset -1px -1px 0 #a4a4a4, inset 1px 0 0 #f4f4f4;"></div><div style="left:728px;top:762.5px;width:258px;height:30px;background:linear-gradient(#eeeeee 0%,#e6e6e6 14%,#d8d8d8 48%,#c3c3c3 85%,#b9b9b9 100%);border-radius:0 0 4px 4px;box-shadow:inset -1px -1px 0 #a4a4a4, inset 1px 0 0 #f4f4f4;"></div><div style="left:988px;top:762.5px;width:291px;height:30px;background:linear-gradient(#eeeeee 0%,#e6e6e6 14%,#d8d8d8 48%,#c3c3c3 85%,#b9b9b9 100%);border-radius:0 0 4px 4px;box-shadow:inset -1px -1px 0 #a4a4a4, inset 1px 0 0 #f4f4f4;"></div><div style="left:5px;top:769px;width:1px;height:18px;background:#8e8e8e;"></div><div style="left:6px;top:769px;width:1px;height:18px;background:#f6f6f6;"></div><div style="left:7px;top:769px;width:1px;height:18px;background:#8e8e8e;"></div><div style="left:8px;top:769px;width:1px;height:18px;background:#f6f6f6;"></div><div style="left:9px;top:769px;width:1px;height:18px;background:#8e8e8e;"></div><div style="left:10px;top:769px;width:1px;height:18px;background:#f6f6f6;"></div><div style="left:219px;top:769px;width:1px;height:18px;background:#8e8e8e;"></div><div style="left:220px;top:769px;width:1px;height:18px;background:#f6f6f6;"></div><div style="left:221px;top:769px;width:1px;height:18px;background:#8e8e8e;"></div><div style="left:222px;top:769px;width:1px;height:18px;background:#f6f6f6;"></div><div style="left:223px;top:769px;width:1px;height:18px;background:#8e8e8e;"></div><div style="left:224px;top:769px;width:1px;height:18px;background:#f6f6f6;"></div><div style="left:413px;top:769px;width:1px;height:18px;background:#8e8e8e;"></div><div style="left:414px;top:769px;width:1px;height:18px;background:#f6f6f6;"></div><div style="left:415px;top:769px;width:1px;height:18px;background:#8e8e8e;"></div><div style="left:416px;top:769px;width:1px;height:18px;background:#f6f6f6;"></div><div style="left:417px;top:769px;width:1px;height:18px;background:#8e8e8e;"></div><div style="left:418px;top:769px;width:1px;height:18px;background:#f6f6f6;"></div><div style="left:731px;top:769px;width:1px;height:18px;background:#8e8e8e;"></div><div style="left:732px;top:769px;width:1px;height:18px;background:#f6f6f6;"></div><div style="left:733px;top:769px;width:1px;height:18px;background:#8e8e8e;"></div><div style="left:734px;top:769px;width:1px;height:18px;background:#f6f6f6;"></div><div style="left:735px;top:769px;width:1px;height:18px;background:#8e8e8e;"></div><div style="left:736px;top:769px;width:1px;height:18px;background:#f6f6f6;"></div><div style="left:991px;top:769px;width:1px;height:18px;background:#8e8e8e;"></div><div style="left:992px;top:769px;width:1px;height:18px;background:#f6f6f6;"></div><div style="left:993px;top:769px;width:1px;height:18px;background:#8e8e8e;"></div><div style="left:994px;top:769px;width:1px;height:18px;background:#f6f6f6;"></div><div style="left:995px;top:769px;width:1px;height:18px;background:#8e8e8e;"></div><div style="left:996px;top:769px;width:1px;height:18px;background:#f6f6f6;"></div><div style="left:996px;top:763px;width:30px;height:28px;background:#ececec;border-radius:4px;box-shadow:inset 0 0 0 1px #d4d4d4;"></div><svg style="left:11.0px;top:765.5px;" width="24" height="24" viewBox="0 0 24 24"><rect x="3" y="6" width="15" height="13" fill="#ececec" stroke="#8a8a8a" stroke-width="1"/><rect x="3" y="6" width="15" height="2.4" fill="#9c9c9c"/><path d="M5 14q1.375 -6 2.75 0q1.375 6 2.75 0q1.375 -6 2.75 0q1.375 6 2.75 0" fill="none" stroke="#d05080" stroke-width="1.2"/><path d="M18 0.5v9.0M13.5 5h9.0M14.85 1.85l6.3 6.3M21.15 1.85l-6.3 6.3" stroke="#f09020" stroke-width="0.9"/></svg><svg style="left:52.0px;top:765.5px;" width="24" height="24" viewBox="0 0 24 24"><rect x="2.5" y="4" width="15" height="14" fill="#e4e4e4" stroke="#8a8a8a" stroke-width="1"/><rect x="2.5" y="4" width="15" height="2" fill="#9c9c9c"/><path d="M10 6v12M2.5 12h15" stroke="#8a8a8a" stroke-width="1"/><rect x="10.5" y="12.5" width="8" height="7" fill="#f4f4f4" stroke="#8a8a8a" stroke-width="0.8"/><path d="M11.5 16.5q0.75 -3.6 1.5 0q0.75 3.6 1.5 0q0.75 -3.6 1.5 0q0.75 3.6 1.5 0" fill="none" stroke="#d05080" stroke-width="1"/><path d="M18.5 6v8M14.5 10h8M15.7 7.2l5.6 5.6M21.3 7.2l-5.6 5.6" stroke="#f09020" stroke-width="0.9"/></svg><svg style="left:93.0px;top:765.5px;" width="24" height="24" viewBox="0 0 24 24"><path d="M3.5 6.5c0-1 .5-1.5 1.5-1.5h4l1.5 2h7c1 0 1.5.5 1.5 1.5v10h-15.5z" fill="url(#gOr)" stroke="#c4873a" stroke-width="1"/><path d="M6.5 11h15l-3 8h-15z" fill="#fdfdfd" stroke="#b9b9b9" stroke-width="0.8"/></svg><svg style="left:125.0px;top:765.5px;" width="24" height="24" viewBox="0 0 24 24"><g opacity="1"><path d="M4.5 4.5h15v15h-13l-2-2z" fill="url(#gBl)" stroke="#2c4a94" stroke-width="1"/><rect x="7.5" y="5" width="9" height="6.5" fill="#eef2fa"/><rect x="8.5" y="14" width="7" height="5.5" fill="#c8d4ec"/><rect x="10" y="15" width="2" height="3.5" fill="#2c4a94"/></g></svg><svg style="left:155.0px;top:765.5px;" width="24" height="24" viewBox="0 0 24 24"><rect x="7" y="3" width="10" height="8" fill="#f4f4f4" stroke="#9a9a9a" stroke-width="1"/><rect x="3" y="10" width="18" height="8" rx="2" fill="url(#gGy)" stroke="#8a8a8a" stroke-width="1"/><rect x="6" y="15" width="12" height="5" fill="#fafafa" stroke="#9a9a9a" stroke-width="0.9"/><path d="M5 13h14" stroke="#b0b0b0" stroke-width="1"/></svg><svg style="left:186.0px;top:765.5px;" width="24" height="24" viewBox="0 0 24 24"><circle cx="12" cy="3" r="1.6" fill="#222"/><path d="M12 3l-7 4M12 3l7 4" stroke="#555" stroke-width="0.7"/><rect x="2.5" y="6.5" width="19" height="14" fill="#fff" stroke="#b8862c" stroke-width="2.4"/><path d="M5 13.5q1.75 -6 3.5 0q1.75 6 3.5 0q1.75 -6 3.5 0q1.75 6 3.5 0" fill="none" stroke="#9a30b0" stroke-width="1.5"/></svg><svg style="left:226.0px;top:765.5px;" width="24" height="24" viewBox="0 0 24 24"><path d="M5 9l5-4v2.6c5 0 8 3 7.5 8-.3 2-1.5 3.4-3 4 1.4-2 1.6-7-4.5-7v2.6z" fill="#f0c898" stroke="#c07828" stroke-width="0.7" opacity="0.7"/></svg><svg style="left:256.0px;top:765.5px;" width="24" height="24" viewBox="0 0 24 24"><path d="M19 9l-5-4v2.6c-5 0-8 3-7.5 8 .3 2 1.5 3.4 3 4-1.4-2-1.6-7 4.5-7v2.6z" fill="#f0c898" stroke="#c07828" stroke-width="0.7" opacity="0.7"/></svg><svg style="left:287.0px;top:765.5px;" width="24" height="24" viewBox="0 0 24 24"><path d="M7 2.5l6.5 13M17 2.5l-6.5 13" stroke="#b8b8b8" stroke-width="2.2" stroke-linecap="round"/><path d="M7 2.5l6.5 13M17 2.5l-6.5 13" stroke="#f4f4f4" stroke-width="0.8"/><circle cx="8.5" cy="18" r="2.6" fill="none" stroke="#d83030" stroke-width="2"/><circle cx="15.5" cy="18" r="2.6" fill="none" stroke="#d83030" stroke-width="2"/></svg><svg style="left:318.0px;top:765.5px;" width="24" height="24" viewBox="0 0 24 24"><g opacity="0.5"><path d="M9 3h5l4 4v8h-9z" fill="#f4f4f4" stroke="#9c9c9c" stroke-width="1"/><path d="M14 3v4h4" fill="none" stroke="#9c9c9c" stroke-width="1"/><path d="M5 7h5l4 4v8h-9z" fill="#fafafa" stroke="#9c9c9c" stroke-width="1"/><path d="M10 7v4h4" fill="none" stroke="#9c9c9c" stroke-width="1"/></g></svg><svg style="left:349.0px;top:765.5px;" width="24" height="24" viewBox="0 0 24 24"><rect x="4.5" y="4.5" width="14" height="16" rx="1.5" fill="#c87830" stroke="#8a4a14" stroke-width="1"/><rect x="8.5" y="2.5" width="6" height="4" rx="1" fill="#d8d8d8" stroke="#8a8a8a" stroke-width="0.8"/><path d="M10 10h5l4 4v7h-9z" fill="#fafafa" stroke="#9a9a9a" stroke-width="1"/><path d="M15 10v4h4" fill="none" stroke="#9a9a9a" stroke-width="1"/></svg><svg style="left:380.0px;top:765.5px;" width="24" height="24" viewBox="0 0 24 24"><path d="M7 7l10.5 10.5M17.5 7l-10.5 10.5" stroke="#8a3c08" stroke-width="3.6" stroke-linecap="butt"/><path d="M7.5 7.5l9.5 9.5M17 7.5l-9.5 9.5" stroke="#e88030" stroke-width="1.5" stroke-linecap="butt"/></svg><svg style="left:419.0px;top:765.5px;" width="24" height="24" viewBox="0 0 24 24"><circle cx="12" cy="12" r="8.3" fill="url(#gBl)" stroke="#2c4a94" stroke-width="1.4"/><path d="M5.5 12l5.5-5.5v3.3h6v4.4h-6v3.3z" fill="#fff" stroke="#c8d4ec" stroke-width="0.5"/></svg><svg style="left:450.0px;top:765.5px;" width="24" height="24" viewBox="0 0 24 24"><g opacity="0.6"><circle cx="12" cy="12" r="8" fill="url(#gBlL)" stroke="#6c84b4" stroke-width="1.2"/><path d="M17.5 12l-5-5v3h-5v4h5v3z" fill="#fff" stroke="#8ea2c8" stroke-width="0.5"/></g></svg><svg style="left:481.0px;top:765.5px;" width="24" height="24" viewBox="0 0 24 24"><g opacity="1"><line x1="13.91" y1="13.91" x2="20.41" y2="20.41" stroke="#c47a2c" stroke-width="2.8" stroke-linecap="round"/><circle cx="9.5" cy="9.5" r="6.3" fill="url(#gGl)" stroke="#5f7ca6" stroke-width="1.9"/></g><path d="M5.8 8v-2.2h2.2M13.2 8v-2.2h-2.2M5.8 11v2.2h2.2M13.2 11v2.2h-2.2" stroke="#fff" stroke-width="2" fill="none"/></svg><svg style="left:512.0px;top:765.5px;" width="24" height="24" viewBox="0 0 24 24"><g opacity="1"><line x1="13.91" y1="13.91" x2="20.41" y2="20.41" stroke="#c47a2c" stroke-width="2.8" stroke-linecap="round"/><circle cx="9.5" cy="9.5" r="6.3" fill="url(#gGl)" stroke="#5f7ca6" stroke-width="1.9"/></g><path d="M9.5 5.5v8M5.5 9.5h8" stroke="#fff" stroke-width="2.8"/><text x="17" y="8" font-family="Liberation Sans, sans-serif" font-size="7" fill="#fff" stroke="#888" stroke-width="0.3">2</text></svg><svg style="left:543.0px;top:765.5px;" width="24" height="24" viewBox="0 0 24 24"><g opacity="1"><line x1="13.91" y1="13.91" x2="20.41" y2="20.41" stroke="#c47a2c" stroke-width="2.8" stroke-linecap="round"/><circle cx="9.5" cy="9.5" r="6.3" fill="url(#gGl)" stroke="#5f7ca6" stroke-width="1.9"/></g><path d="M5.5 9.5h8" stroke="#fff" stroke-width="2.8"/><text x="17" y="8" font-family="Liberation Sans, sans-serif" font-size="7" fill="#fff" stroke="#888" stroke-width="0.3">2</text></svg><svg style="left:575.0px;top:765.5px;" width="24" height="24" viewBox="0 0 24 24"><g opacity="0.55"><path d="M1 8h3v-6h4v6h3v-6h4v6h3v-6h2" fill="none" stroke="#d84848" stroke-width="1.1"/><g opacity="1"><line x1="15.15" y1="16.15" x2="21.65" y2="22.65" stroke="#d8a060" stroke-width="2.8" stroke-linecap="round"/><circle cx="12" cy="13" r="4.5" fill="#f0e8f0" stroke="#a8a8b8" stroke-width="1.9"/></g><path d="M10 15v-4h2v4h2v-4" fill="none" stroke="#d05080" stroke-width="0.9"/></g></svg><svg style="left:606.0px;top:765.5px;" width="24" height="24" viewBox="0 0 24 24"><rect x="2.5" y="2.5" width="16" height="16" fill="#d8e4f6" stroke="#3a5a98" stroke-width="1"/><path d="M2.5 7v-4.5h4.5M14 2.5h4.5v4.5M2.5 14v4.5h4.5" fill="none" stroke="#3a5a98" stroke-width="2"/><g transform="translate(2 2)"><g opacity="1"><line x1="12.85" y1="12.85" x2="19.35" y2="19.35" stroke="#c47a2c" stroke-width="2.8" stroke-linecap="round"/><circle cx="9" cy="9" r="5.5" fill="url(#gGl)" stroke="#5f7ca6" stroke-width="1.9"/></g></g></svg><svg style="left:637.0px;top:765.5px;" width="24" height="24" viewBox="0 0 24 24"><path d="M4 1v6M2 5l2 2.5 2-2.5M4 23v-6M2 19l2-2.5 2 2.5" fill="none" stroke="#1c4a9c" stroke-width="1.3"/><path d="M3 12h4M19 12h3" stroke="#d84848" stroke-width="1.4"/><g transform="translate(2 2)"><g opacity="1"><line x1="14.85" y1="13.85" x2="21.35" y2="20.35" stroke="#c47a2c" stroke-width="2.8" stroke-linecap="round"/><circle cx="11" cy="10" r="5.5" fill="#ecdcec" stroke="#8a8aa0" stroke-width="1.9"/></g></g><path d="M9.5 14v-4.5h3v4.5h3v-4.5" fill="none" stroke="#c04080" stroke-width="1.1"/></svg><svg style="left:668.0px;top:765.5px;" width="24" height="24" viewBox="0 0 24 24"><path d="M4 1v6M2 5l2 2.5 2-2.5M4 23v-6M2 19l2-2.5 2 2.5" fill="none" stroke="#1c4a9c" stroke-width="1.3"/><path d="M3 12h4M19 12h3" stroke="#d84848" stroke-width="1.4"/><g transform="translate(2 2)"><g opacity="1"><line x1="14.85" y1="13.85" x2="21.35" y2="20.35" stroke="#c47a2c" stroke-width="2.8" stroke-linecap="round"/><circle cx="11" cy="10" r="5.5" fill="#ecdcec" stroke="#8a8aa0" stroke-width="1.9"/></g></g><path d="M9.5 14v-4.5h3v4.5h3v-4.5" fill="none" stroke="#c04080" stroke-width="1.1"/></svg><svg style="left:699.0px;top:765.5px;" width="24" height="24" viewBox="0 0 24 24"><g opacity="0.45"><circle cx="10" cy="10" r="8" fill="none" stroke="#9a9a9a" stroke-width="0.8"/><path d="M10 0v20M0 10h20" stroke="#9a9a9a" stroke-width="0.7"/><g transform="translate(3 4)"><g opacity="1"><line x1="12.5" y1="12.5" x2="19.0" y2="19.0" stroke="#c47a2c" stroke-width="2.8" stroke-linecap="round"/><circle cx="9" cy="9" r="5" fill="url(#gGl)" stroke="#5f7ca6" stroke-width="1.9"/></g></g></g></svg><svg style="left:817.0px;top:765.5px;" width="24" height="24" viewBox="0 0 24 24"><rect x="3" y="3" width="18" height="8" fill="#e4ecf8" stroke="#5a7ab8" stroke-width="0.8"/><rect x="3" y="13" width="18" height="8" fill="#e4ecf8" stroke="#5a7ab8" stroke-width="0.8"/><path d="M4 9l4-3 3 2 4-4 3 3 3-2" fill="none" stroke="#d82020" stroke-width="1.2"/><path d="M4 16l3 3 4-3 3 2 3-2 4 3" fill="none" stroke="#1c3a9c" stroke-width="1.2"/><path transform="translate(5 5) rotate(-45)" d="M0 -3.5l3.5 3.5h-2v3.5h-3v-3.5h-2z" fill="#38c038" stroke="#0a7a1a" stroke-width="0.6"/><path transform="translate(19 5) rotate(45)" d="M0 -3.5l3.5 3.5h-2v3.5h-3v-3.5h-2z" fill="#38c038" stroke="#0a7a1a" stroke-width="0.6"/><path transform="translate(5 19) rotate(-135)" d="M0 -3.5l3.5 3.5h-2v3.5h-3v-3.5h-2z" fill="#38c038" stroke="#0a7a1a" stroke-width="0.6"/><path transform="translate(19 19) rotate(135)" d="M0 -3.5l3.5 3.5h-2v3.5h-3v-3.5h-2z" fill="#38c038" stroke="#0a7a1a" stroke-width="0.6"/></svg><svg style="left:848.0px;top:765.5px;" width="24" height="24" viewBox="0 0 24 24"><rect x="3" y="3" width="18" height="8" fill="#e4ecf8" stroke="#5a7ab8" stroke-width="0.8"/><rect x="3" y="13" width="18" height="8" fill="#e4ecf8" stroke="#5a7ab8" stroke-width="0.8"/><path d="M4 9l4-3 3 2 4-4 3 3 3-2" fill="none" stroke="#d82020" stroke-width="1.2"/><path d="M4 16l3 3 4-3 3 2 3-2 4 3" fill="none" stroke="#1c3a9c" stroke-width="1.2"/><path transform="translate(8 7) rotate(135)" d="M0 -3.5l3.5 3.5h-2v3.5h-3v-3.5h-2z" fill="#38c038" stroke="#0a7a1a" stroke-width="0.6"/><path transform="translate(16 17) rotate(-45)" d="M0 -3.5l3.5 3.5h-2v3.5h-3v-3.5h-2z" fill="#38c038" stroke="#0a7a1a" stroke-width="0.6"/></svg><svg style="left:879.0px;top:765.5px;" width="24" height="24" viewBox="0 0 24 24"><rect x="3" y="4" width="18" height="16" fill="#e4ecf8" stroke="#5a7ab8" stroke-width="0.8"/><path d="M4 9l4-2 3 2 4-3 3 4 3-2" fill="none" stroke="#d82020" stroke-width="1.2"/><path d="M4 15l3 2 4-3 3 2 3-1 4 2" fill="none" stroke="#1c3a9c" stroke-width="1.2"/><path transform="translate(6 5) rotate(0)" d="M0 -3.5l3.5 3.5h-2v3.5h-3v-3.5h-2z" fill="#38c038" stroke="#0a7a1a" stroke-width="0.6"/><path transform="translate(19 19) rotate(180)" d="M0 -3.5l3.5 3.5h-2v3.5h-3v-3.5h-2z" fill="#38c038" stroke="#0a7a1a" stroke-width="0.6"/></svg><svg style="left:910.0px;top:765.5px;" width="24" height="24" viewBox="0 0 24 24"><g opacity="0.6"><rect x="3" y="6" width="17" height="13" fill="#e8ecf4" stroke="#9ab0d0" stroke-width="0.8"/><path d="M3 12.5h17" stroke="#9ab0d0" stroke-width="0.7"/><path d="M4 10h3M4 16c1 2 3 2 4 0M15 9c1 2 3 2 4 0" fill="none" stroke="#c05070" stroke-width="0.9"/><path d="M8 14c0-6 4-9 8-8v-2.5l4.5 4-4.5 4v-2.5c-3-.500-6 1-8 5z" fill="#f0c080" stroke="#d8a050" stroke-width="0.6"/></g><circle cx="18" cy="18.5" r="3.6" fill="#8ad08a" stroke="#5ab05a" stroke-width="0.5"/><path d="M18 16.5v4M16 18.5h4" stroke="#fff" stroke-width="1.3"/></svg><svg style="left:941.0px;top:765.5px;" width="24" height="24" viewBox="0 0 24 24"><g opacity="0.6"><rect x="3" y="6" width="17" height="13" fill="#e8ecf4" stroke="#9ab0d0" stroke-width="0.8"/><path d="M3 12.5h17" stroke="#9ab0d0" stroke-width="0.7"/><path d="M4 10h3M4 16c1 2 3 2 4 0M15 9c1 2 3 2 4 0" fill="none" stroke="#c05070" stroke-width="0.9"/><path d="M8 14c0-6 4-9 8-8v-2.5l4.5 4-4.5 4v-2.5c-3-.500-6 1-8 5z" fill="#f0c080" stroke="#d8a050" stroke-width="0.6"/></g></svg><svg style="left:998.0px;top:765.5px;" width="24" height="24" viewBox="0 0 24 24"><rect x="3.5" y="3.5" width="17" height="17" fill="#f4f4fa" stroke="#8a8aa8" stroke-width="1"/><path d="M9.2 3.5v17M14.8 3.5v17M3.5 9.2h17M3.5 14.8h17" stroke="#8a8ab8" stroke-width="0.9"/></svg><svg style="left:40px;top:776px;" width="9" height="6" viewBox="0 0 9 6"><path d="M0 0h8L4 4.5z" fill="#b4000c"/></svg><svg style="left:81px;top:776px;" width="9" height="6" viewBox="0 0 9 6"><path d="M0 0h8L4 4.5z" fill="#b4000c"/></svg><div style="left:736px;top:768px;width:78px;height:20px;background:#fff;border-radius:4px;box-shadow:inset 0 0 0 1px #a9a9a9, inset 0 2px 1px -1px #888;"></div><div style="left:798px;top:768px;width:16px;height:20px;background:linear-gradient(#d21a26 0%,#b8000f 55%,#9c000c 100%);border-radius:0 4px 4px 0;box-shadow:inset 0 0 0 1px #8e0008;"></div><svg style="left:802px;top:776.0px;" width="9" height="6" viewBox="0 0 9 6"><path d="M0 0h8L4 5z" fill="#fff"/></svg><span class="t" style="left:739px;top:773.22px;font-size:11.2px;line-height:11.2px;color:#000;">family</span><div style="left:1px;top:793.5px;width:295px;height:29px;background:linear-gradient(#eeeeee 0%,#e6e6e6 14%,#d8d8d8 48%,#c3c3c3 85%,#b9b9b9 100%);border-radius:0 0 4px 4px;box-shadow:inset -1px -1px 0 #a4a4a4, inset 1px 0 0 #f4f4f4;"></div><div style="left:298px;top:793.5px;width:68px;height:29px;background:linear-gradient(#eeeeee 0%,#e6e6e6 14%,#d8d8d8 48%,#c3c3c3 85%,#b9b9b9 100%);border-radius:0 0 4px 4px;box-shadow:inset -1px -1px 0 #a4a4a4, inset 1px 0 0 #f4f4f4;"></div><div style="left:368px;top:793.5px;width:309px;height:29px;background:linear-gradient(#eeeeee 0%,#e6e6e6 14%,#d8d8d8 48%,#c3c3c3 85%,#b9b9b9 100%);border-radius:0 0 4px 4px;box-shadow:inset -1px -1px 0 #a4a4a4, inset 1px 0 0 #f4f4f4;"></div><div style="left:678px;top:793.5px;width:37px;height:29px;background:linear-gradient(#eeeeee 0%,#e6e6e6 14%,#d8d8d8 48%,#c3c3c3 85%,#b9b9b9 100%);border-radius:0 0 4px 4px;box-shadow:inset -1px -1px 0 #a4a4a4, inset 1px 0 0 #f4f4f4;"></div><div style="left:717px;top:793.5px;width:38px;height:29px;background:linear-gradient(#eeeeee 0%,#e6e6e6 14%,#d8d8d8 48%,#c3c3c3 85%,#b9b9b9 100%);border-radius:0 0 4px 4px;box-shadow:inset -1px -1px 0 #a4a4a4, inset 1px 0 0 #f4f4f4;"></div><div style="left:757px;top:793.5px;width:522px;height:29px;background:linear-gradient(#eeeeee 0%,#e6e6e6 14%,#d8d8d8 48%,#c3c3c3 85%,#b9b9b9 100%);border-radius:0 0 4px 4px;box-shadow:inset -1px -1px 0 #a4a4a4, inset 1px 0 0 #f4f4f4;"></div><div style="left:5px;top:799px;width:1px;height:18px;background:#8e8e8e;"></div><div style="left:6px;top:799px;width:1px;height:18px;background:#f6f6f6;"></div><div style="left:7px;top:799px;width:1px;height:18px;background:#8e8e8e;"></div><div style="left:8px;top:799px;width:1px;height:18px;background:#f6f6f6;"></div><div style="left:9px;top:799px;width:1px;height:18px;background:#8e8e8e;"></div><div style="left:10px;top:799px;width:1px;height:18px;background:#f6f6f6;"></div><div style="left:301px;top:799px;width:1px;height:18px;background:#8e8e8e;"></div><div style="left:302px;top:799px;width:1px;height:18px;background:#f6f6f6;"></div><div style="left:303px;top:799px;width:1px;height:18px;background:#8e8e8e;"></div><div style="left:304px;top:799px;width:1px;height:18px;background:#f6f6f6;"></div><div style="left:305px;top:799px;width:1px;height:18px;background:#8e8e8e;"></div><div style="left:306px;top:799px;width:1px;height:18px;background:#f6f6f6;"></div><div style="left:371px;top:799px;width:1px;height:18px;background:#8e8e8e;"></div><div style="left:372px;top:799px;width:1px;height:18px;background:#f6f6f6;"></div><div style="left:373px;top:799px;width:1px;height:18px;background:#8e8e8e;"></div><div style="left:374px;top:799px;width:1px;height:18px;background:#f6f6f6;"></div><div style="left:375px;top:799px;width:1px;height:18px;background:#8e8e8e;"></div><div style="left:376px;top:799px;width:1px;height:18px;background:#f6f6f6;"></div><div style="left:681px;top:799px;width:1px;height:18px;background:#8e8e8e;"></div><div style="left:682px;top:799px;width:1px;height:18px;background:#f6f6f6;"></div><div style="left:683px;top:799px;width:1px;height:18px;background:#8e8e8e;"></div><div style="left:684px;top:799px;width:1px;height:18px;background:#f6f6f6;"></div><div style="left:685px;top:799px;width:1px;height:18px;background:#8e8e8e;"></div><div style="left:686px;top:799px;width:1px;height:18px;background:#f6f6f6;"></div><div style="left:720px;top:799px;width:1px;height:18px;background:#8e8e8e;"></div><div style="left:721px;top:799px;width:1px;height:18px;background:#f6f6f6;"></div><div style="left:722px;top:799px;width:1px;height:18px;background:#8e8e8e;"></div><div style="left:723px;top:799px;width:1px;height:18px;background:#f6f6f6;"></div><div style="left:724px;top:799px;width:1px;height:18px;background:#8e8e8e;"></div><div style="left:725px;top:799px;width:1px;height:18px;background:#f6f6f6;"></div><div style="left:760px;top:799px;width:1px;height:18px;background:#8e8e8e;"></div><div style="left:761px;top:799px;width:1px;height:18px;background:#f6f6f6;"></div><div style="left:762px;top:799px;width:1px;height:18px;background:#8e8e8e;"></div><div style="left:763px;top:799px;width:1px;height:18px;background:#f6f6f6;"></div><div style="left:764px;top:799px;width:1px;height:18px;background:#8e8e8e;"></div><div style="left:765px;top:799px;width:1px;height:18px;background:#f6f6f6;"></div><div style="left:10px;top:794px;width:29px;height:28px;background:#f2f2f2;border-radius:4px;box-shadow:inset 0 0 0 1px #dcdcdc;"></div><div style="left:337px;top:794px;width:29px;height:28px;background:#f2f2f2;border-radius:4px;box-shadow:inset 0 0 0 1px #dcdcdc;"></div><svg style="left:12.0px;top:796.0px;" width="24" height="24" viewBox="0 0 24 24"><path d="M3 21l10-10" stroke="#111" stroke-width="3.4" stroke-linecap="round"/><path d="M12 12l2.5-2.5" stroke="#e8e8e8" stroke-width="3.4"/><path d="M8 3l.900 1.8 2 .300-1.5 1.4.400 2-1.8-1-1.8 1 .400-2-1.5-1.4 2-.300z" fill="#e8f0ff" stroke="#3a58c8" stroke-width="0.8"/><path d="M19 6l.800 1.6 1.7.300-1.2 1.2.300 1.7-1.6-.800-1.6.800.3-1.7-1.2-1.2 1.7-.300z" fill="#ffe8e8" stroke="#d83030" stroke-width="0.8"/><path d="M16.5 13.5l.700 1.4 1.5.200-1.1 1 .300 1.5-1.4-.700-1.4.700.3-1.5-1.1-1 1.5-.200z" fill="#f8e0f8" stroke="#b030c0" stroke-width="0.8"/></svg><svg style="left:42.0px;top:796.0px;" width="24" height="24" viewBox="0 0 24 24"><g transform="translate(7 12) rotate(-25)"><rect x="-4" y="-6" width="8" height="12" rx="1" fill="#fafafa" stroke="#7a7a7a" stroke-width="0.8"/><circle cx="-1.5" cy="-3" r="1" fill="#d83030"/><circle cx="1.5" cy="0" r="1" fill="#d83030"/><circle cx="-1" cy="3" r="1" fill="#d83030"/></g><g transform="translate(12 11) rotate(0)"><rect x="-4" y="-6" width="8" height="12" rx="1" fill="#fafafa" stroke="#7a7a7a" stroke-width="0.8"/><circle cx="-1.5" cy="-3" r="1" fill="#d83030"/><circle cx="1.5" cy="0" r="1" fill="#d83030"/><circle cx="-1" cy="3" r="1" fill="#d83030"/></g><g transform="translate(17 12) rotate(25)"><rect x="-4" y="-6" width="8" height="12" rx="1" fill="#fafafa" stroke="#7a7a7a" stroke-width="0.8"/><circle cx="-1.5" cy="-3" r="1" fill="#d83030"/><circle cx="1.5" cy="0" r="1" fill="#d83030"/><circle cx="-1" cy="3" r="1" fill="#d83030"/></g></svg><svg style="left:73.0px;top:796.0px;" width="24" height="24" viewBox="0 0 24 24"><rect x="3.5" y="4" width="17" height="6.5" fill="url(#gGy)" stroke="#8a8a8a" stroke-width="1"/><rect x="3.5" y="4" width="17" height="1.8" fill="#8a8aa0"/><rect x="3.5" y="13.5" width="17" height="6.5" fill="url(#gGy)" stroke="#8a8a8a" stroke-width="1"/><rect x="3.5" y="13.5" width="17" height="1.8" fill="#8a8aa0"/></svg><svg style="left:104.0px;top:796.0px;" width="24" height="24" viewBox="0 0 24 24"><rect x="3" y="4" width="7.5" height="16" fill="url(#gGy)" stroke="#8a8a8a" stroke-width="1"/><rect x="3" y="4" width="7.5" height="1.8" fill="#8a8aa0"/><rect x="13.5" y="4" width="7.5" height="16" fill="url(#gGy)" stroke="#8a8a8a" stroke-width="1"/><rect x="13.5" y="4" width="7.5" height="1.8" fill="#8a8aa0"/></svg><svg style="left:136.0px;top:796.0px;" width="24" height="24" viewBox="0 0 24 24"><rect x="2.5" y="1.0" width="8.5" height="6" rx="1.5" fill="#c8d0e4" stroke="#222" stroke-width="1" stroke-dasharray="1.5 1"/><rect x="13.5" y="1.0" width="8.5" height="6" rx="1.5" fill="#c8d0e4" stroke="#222" stroke-width="1" stroke-dasharray="1.5 1"/><rect x="2.5" y="8.7" width="8.5" height="6" rx="1.5" fill="#c8d0e4" stroke="#222" stroke-width="1" stroke-dasharray="1.5 1"/><rect x="13.5" y="8.7" width="8.5" height="6" rx="1.5" fill="#c8d0e4" stroke="#222" stroke-width="1" stroke-dasharray="1.5 1"/><rect x="2.5" y="16.4" width="8.5" height="6" rx="1.5" fill="#c8d0e4" stroke="#222" stroke-width="1" stroke-dasharray="1.5 1"/><rect x="13.5" y="16.4" width="8.5" height="6" rx="1.5" fill="#c8d0e4" stroke="#222" stroke-width="1" stroke-dasharray="1.5 1"/></svg><svg style="left:306.0px;top:796.0px;" width="24" height="24" viewBox="0 0 24 24"><path d="M6 4v17" stroke="#8a8a8a" stroke-width="1.3"/><path d="M6.5 5c3-2 5 2 7.5 0s4-1 5-1v9c-2-1-3-.500-5 .500s-4.5-1.5-7.5.500z" fill="#e03038" stroke="#a81820" stroke-width="0.7"/></svg><svg style="left:339.0px;top:796.0px;" width="24" height="24" viewBox="0 0 24 24"><path d="M4 4h16c1.5 0 2 .500 2 2v8c0 1.5-.500 2-2 2h-9l-5 4 1-4h-3c-1.5 0-2-.500-2-2v-8c0-1.5.500-2 2-2z" fill="#555" stroke="#d8c060" stroke-width="1.6"/><text x="10" y="14.5" font-family="Liberation Serif, serif" font-style="italic" font-weight="700" font-size="12" fill="#fff">i</text></svg><svg style="left:378.0px;top:796.0px;" width="24" height="24" viewBox="0 0 24 24"><g opacity="0.7"><path d="M5 9l6-5v3h8v4h-8v3z" fill="#a8bce0" stroke="#7a94c8" stroke-width="0.8"/><path d="M2 15h5v5h14" fill="none" stroke="#7ab87a" stroke-width="1.3"/></g></svg><svg style="left:408.0px;top:796.0px;" width="24" height="24" viewBox="0 0 24 24"><g opacity="0.7"><path d="M19 9l-6-5v3h-8v4h8v3z" fill="#a8bce0" stroke="#7a94c8" stroke-width="0.8"/><path d="M3 20h11v-5h6" fill="none" stroke="#7ab87a" stroke-width="1.3"/></g></svg><svg style="left:687.0px;top:796.0px;" width="24" height="24" viewBox="0 0 24 24"><g opacity="0.55"><rect x="4" y="13" width="3" height="7" fill="#8aa0e0"/><rect x="7.5" y="8" width="3" height="12" fill="#6ac06a"/><rect x="11" y="5" width="3" height="15" fill="#e89090"/><rect x="14.5" y="2" width="3" height="18" fill="#a8b8e8"/><rect x="18" y="9" width="3" height="11" fill="#6ac06a"/><path d="M2 20.5h21" stroke="#e06060" stroke-width="1"/></g></svg><svg style="left:725.0px;top:796.0px;" width="24" height="24" viewBox="0 0 24 24"><rect x="5" y="3.5" width="14" height="17" fill="url(#gGy)" stroke="#7c7c7c" stroke-width="1"/><rect x="7" y="5.5" width="10" height="3" fill="#3c5a34"/><rect x="8" y="6" width="8" height="1.4" fill="#8fe06a"/><rect x="7.0" y="10.5" width="1.7" height="1.9" fill="#fff" stroke="#888" stroke-width="0.5"/><rect x="9.7" y="10.5" width="1.7" height="1.9" fill="#fff" stroke="#888" stroke-width="0.5"/><rect x="12.4" y="10.5" width="1.7" height="1.9" fill="#fff" stroke="#888" stroke-width="0.5"/><rect x="15.1" y="10.5" width="1.7" height="1.9" fill="#fff" stroke="#888" stroke-width="0.5"/><rect x="7.0" y="13.7" width="1.7" height="1.9" fill="#fff" stroke="#888" stroke-width="0.5"/><rect x="9.7" y="13.7" width="1.7" height="1.9" fill="#fff" stroke="#888" stroke-width="0.5"/><rect x="12.4" y="13.7" width="1.7" height="1.9" fill="#fff" stroke="#888" stroke-width="0.5"/><rect x="15.1" y="13.7" width="1.7" height="1.9" fill="#fff" stroke="#888" stroke-width="0.5"/><rect x="7.0" y="16.9" width="1.7" height="1.9" fill="#fff" stroke="#888" stroke-width="0.5"/><rect x="9.7" y="16.9" width="1.7" height="1.9" fill="#fff" stroke="#888" stroke-width="0.5"/><rect x="12.4" y="16.9" width="1.7" height="1.9" fill="#fff" stroke="#888" stroke-width="0.5"/><rect x="15.1" y="16.9" width="1.7" height="1.9" fill="#fff" stroke="#888" stroke-width="0.5"/></svg><svg style="left:913.0px;top:796.0px;" width="24" height="24" viewBox="0 0 24 24"><rect x="4" y="3.5" width="13" height="11" fill="#f4f4f4" stroke="#888" stroke-width="1"/><rect x="4" y="3.5" width="13" height="2.6" fill="#a9a9a9"/><path d="M6 8.5h9M6 11h9" stroke="#999" stroke-width="1"/><g transform="translate(11 10) scale(0.5)"><g opacity="1"><path d="M4.5 4.5h15v15h-13l-2-2z" fill="url(#gBl)" stroke="#2c4a94" stroke-width="1"/><rect x="7.5" y="5" width="9" height="6.5" fill="#eef2fa"/><rect x="8.5" y="14" width="7" height="5.5" fill="#c8d4ec"/><rect x="10" y="15" width="2" height="3.5" fill="#2c4a94"/></g></g></svg><svg style="left:944.0px;top:796.0px;" width="24" height="24" viewBox="0 0 24 24"><rect x="4" y="2.5" width="13" height="11" fill="#f6f6f6" stroke="#888" stroke-width="1"/><rect x="4" y="2.5" width="13" height="2.4" fill="#a9a9a9"/><path d="M6 15c3-4.5 8-4.5 11 0-3 4-8 4-11 0z" fill="#dfe8f6" stroke="#4a68a8" stroke-width="1"/><circle cx="11.5" cy="15" r="2" fill="#2c4a8c"/><circle cx="18.5" cy="17.5" r="3.2" fill="#e0606a"/><rect x="16.6" y="17" width="3.8" height="1.1" fill="#fff"/></svg><span class="t" style="left:164px;top:802.52px;font-size:11.2px;line-height:11.2px;color:#000;">Subwindow:</span><div style="left:228px;top:798px;width:68px;height:20px;background:#fff;border-radius:4px;box-shadow:inset 0 0 0 1px #a9a9a9, inset 0 2px 1px -1px #888;"></div><div style="left:280px;top:798px;width:16px;height:20px;background:linear-gradient(#d21a26 0%,#b8000f 55%,#9c000c 100%);border-radius:0 4px 4px 0;box-shadow:inset 0 0 0 1px #8e0008;"></div><svg style="left:284px;top:806.0px;" width="9" height="6" viewBox="0 0 9 6"><path d="M0 0h8L4 5z" fill="#fff"/></svg><span class="t" style="left:242px;top:803.22px;font-size:11.2px;line-height:11.2px;color:#000;">1</span><div style="left:437px;top:798px;width:119px;height:20px;background:#e3e3e3;border-radius:4px;box-shadow:inset 0 0 0 1px #b8b8b8;"></div><div style="left:540px;top:799px;width:15px;height:18px;background:linear-gradient(#cfcfcf,#bdbdbd);border-radius:0 3px 3px 0;"></div><svg style="left:544px;top:806.0px;" width="8" height="5" viewBox="0 0 8 5"><path d="M0 0h7L3.5 4z" fill="#f4f4f4"/></svg><span class="t" style="left:441px;top:803.22px;font-size:11.2px;line-height:11.2px;color:#8a8a8a;">Data Point</span><div style="left:557px;top:798px;width:120px;height:21px;background:#e3e3e3;border-radius:4px;box-shadow:inset 0 1px 0 #bcbcbc, inset 1px 0 0 #cfcfcf, inset 0 -1px 0 #fff;"></div><div style="left:767px;top:798px;width:143px;height:20px;background:#fff;border-radius:4px;box-shadow:inset 0 0 0 1px #a9a9a9, inset 0 2px 1px -1px #888;"></div><div style="left:894px;top:798px;width:16px;height:20px;background:linear-gradient(#d21a26 0%,#b8000f 55%,#9c000c 100%);border-radius:0 4px 4px 0;box-shadow:inset 0 0 0 1px #8e0008;"></div><svg style="left:898px;top:806.0px;" width="9" height="6" viewBox="0 0 9 6"><path d="M0 0h8L4 5z" fill="#fff"/></svg><span class="t" style="left:770px;top:803.22px;font-size:11.2px;line-height:11.2px;color:#000;">Classic</span><div style="left:2px;top:826px;width:197px;height:23px;background:#f3f3f3;box-shadow:inset 1px 1px 0 #fff, inset -1px 0 0 #c4c4c4;border-top:1px solid #dadada;box-sizing:border-box;"></div><div style="left:9px;top:828px;width:17px;height:17px;background:#d9d9d9;"></div><svg style="left:10.5px;top:829.5px;" width="14" height="14" viewBox="0 0 14 14"><rect x="0.5" y="0.5" width="13" height="13" fill="#fff" stroke="#222" stroke-width="1"/><path d="M1 12l7-8" stroke="#222" stroke-width="1"/></svg><span class="t" style="left:29px;top:831.82px;font-size:11.2px;line-height:11.2px;color:#000;">lab6 nand2_sim schematic</span><svg style="left:180px;top:832px;" width="9" height="9" viewBox="0 0 9 9"><path d="M1.5 1.5l6 6M7.5 1.5l-6 6" stroke="#8a8a8a" stroke-width="1.5"/></svg><div style="left:1px;top:849px;width:1278px;height:510px;background:#fff;"></div><div style="left:3px;top:849px;width:1274px;height:2px;background:#0c0c0c;"></div><div style="left:3px;top:849px;width:2px;height:506px;background:#0c0c0c;"></div><div style="left:1275px;top:849px;width:2px;height:510px;background:#0c0c0c;"></div><div style="left:1px;top:1357px;width:1276px;height:2px;background:#0c0c0c;"></div><svg style="left:4px;top:849px;" width="1273" height="510" viewBox="4 849 1273 510"><path d="M6 853H1274M6 1353H1274M7 854V1354M1273 854V1354" fill="none" stroke="#c8102e" stroke-width="2" stroke-dasharray="4 2" shape-rendering="crispEdges"/><text x="16" y="874" font-family="'Liberation Serif', serif" font-size="14.3" fill="#111">Transient Response</text><text x="1105" y="873.5" font-family="'Liberation Serif', serif" font-size="14.3" fill="#111">Tue Oct 24 22:29:10</text><text x="1105" y="889.8" font-family="'Liberation Serif', serif" font-size="14.3" fill="#111">2023</text><text x="1264.5" y="873.5" font-family="'Liberation Serif', serif" font-size="14.3" fill="#111">1</text><defs><linearGradient id="lh" x1="0" y1="0" x2="0" y2="1"><stop offset="0" stop-color="#cdcdcd"/><stop offset="1" stop-color="#a4a4a4"/></linearGradient><linearGradient id="sl" x1="0" y1="0" x2="0" y2="1"><stop offset="0" stop-color="#dfe2e8"/><stop offset="0.5" stop-color="#b9bfca"/><stop offset="1" stop-color="#8e96a4"/></linearGradient><linearGradient id="sl2" x1="0" y1="0" x2="0" y2="1"><stop offset="0" stop-color="#d6d6d6"/><stop offset="0.45" stop-color="#fdfdfd"/><stop offset="1" stop-color="#d0d0d0"/></linearGradient><linearGradient id="ol" x1="0" y1="0" x2="1" y2="0"><stop offset="0" stop-color="#c8c040"/><stop offset="1" stop-color="#8c8410"/></linearGradient></defs><rect x="11" y="882" width="123" height="19" fill="url(#lh)"/><rect x="107" y="883" width="1" height="18" fill="#7a7a7a"/><rect x="108" y="883" width="1" height="18" fill="#d8d8d8"/><text x="12" y="894.7" font-family="'Liberation Sans', sans-serif" font-size="11.2" fill="#111">Name</text><text x="110" y="894.7" font-family="'Liberation Sans', sans-serif" font-size="11.2" fill="#111">Vis</text><rect x="132" y="882" width="2" height="468" fill="#b4b4b4"/><text x="0" y="0"></text><rect x="216.5" y="885.5" width="13" height="23" rx="1.5" fill="#f0f0f0" stroke="#8a8a8a" stroke-width="1"/><rect x="1228.5" y="885.5" width="13" height="23" rx="1.5" fill="#f0f0f0" stroke="#8a8a8a" stroke-width="1"/><path d="M218.8 896l5.5-3.5v7z" fill="#c4001a"/><path d="M1236.7 896l-5.5-3.5v7z" fill="#c4001a"/><rect x="228" y="882" width="1000.5" height="30" rx="4" fill="url(#sl)"/><rect x="240" y="885" width="977" height="24" rx="3" fill="url(#sl2)"/><path d="M233.5 890v14M236.5 890v14M1220.5 890v14M1223.5 890v14" stroke="#111" stroke-width="1"/><path d="M236.5 918V1035M257.5 918V1035M277.5 918V1035M298.5 918V1035M339.5 918V1035M359.5 918V1035M380.5 918V1035M400.5 918V1035M441.5 918V1035M462.5 918V1035M482.5 918V1035M503.5 918V1035M544.5 918V1035M564.5 918V1035M585.5 918V1035M605.5 918V1035M646.5 918V1035M667.5 918V1035M687.5 918V1035M708.5 918V1035M749.5 918V1035M769.5 918V1035M790.5 918V1035M810.5 918V1035M851.5 918V1035M872.5 918V1035M892.5 918V1035M913.5 918V1035M954.5 918V1035M974.5 918V1035M995.5 918V1035M1015.5 918V1035M1056.5 918V1035M1077.5 918V1035M1097.5 918V1035M1118.5 918V1035M1159.5 918V1035M1179.5 918V1035M1200.5 918V1035M1220.5 918V1035M236.5 1047V1165M257.5 1047V1165M277.5 1047V1165M298.5 1047V1165M339.5 1047V1165M359.5 1047V1165M380.5 1047V1165M400.5 1047V1165M441.5 1047V1165M462.5 1047V1165M482.5 1047V1165M503.5 1047V1165M544.5 1047V1165M564.5 1047V1165M585.5 1047V1165M605.5 1047V1165M646.5 1047V1165M667.5 1047V1165M687.5 1047V1165M708.5 1047V1165M749.5 1047V1165M769.5 1047V1165M790.5 1047V1165M810.5 1047V1165M851.5 1047V1165M872.5 1047V1165M892.5 1047V1165M913.5 1047V1165M954.5 1047V1165M974.5 1047V1165M995.5 1047V1165M1015.5 1047V1165M1056.5 1047V1165M1077.5 1047V1165M1097.5 1047V1165M1118.5 1047V1165M1159.5 1047V1165M1179.5 1047V1165M1200.5 1047V1165M1220.5 1047V1165M236.5 1177V1294M257.5 1177V1294M277.5 1177V1294M298.5 1177V1294M339.5 1177V1294M359.5 1177V1294M380.5 1177V1294M400.5 1177V1294M441.5 1177V1294M462.5 1177V1294M482.5 1177V1294M503.5 1177V1294M544.5 1177V1294M564.5 1177V1294M585.5 1177V1294M605.5 1177V1294M646.5 1177V1294M667.5 1177V1294M687.5 1177V1294M708.5 1177V1294M749.5 1177V1294M769.5 1177V1294M790.5 1177V1294M810.5 1177V1294M851.5 1177V1294M872.5 1177V1294M892.5 1177V1294M913.5 1177V1294M954.5 1177V1294M974.5 1177V1294M995.5 1177V1294M1015.5 1177V1294M1056.5 1177V1294M1077.5 1177V1294M1097.5 1177V1294M1118.5 1177V1294M1159.5 1177V1294M1179.5 1177V1294M1200.5 1177V1294M1220.5 1177V1294" stroke="#cacaca" stroke-width="1" stroke-dasharray="1 2" fill="none" shape-rendering="crispEdges"/><path d="M216.5 918V1035M318.5 918V1035M421.5 918V1035M523.5 918V1035M626.5 918V1035M728.5 918V1035M831.5 918V1035M933.5 918V1035M1036.5 918V1035M1138.5 918V1035M1241.5 918V1035M216.5 1047V1165M318.5 1047V1165M421.5 1047V1165M523.5 1047V1165M626.5 1047V1165M728.5 1047V1165M831.5 1047V1165M933.5 1047V1165M1036.5 1047V1165M1138.5 1047V1165M1241.5 1047V1165M216.5 1177V1294M318.5 1177V1294M421.5 1177V1294M523.5 1177V1294M626.5 1177V1294M728.5 1177V1294M831.5 1177V1294M933.5 1177V1294M1036.5 1177V1294M1138.5 1177V1294M1241.5 1177V1294" stroke="#a4a4a4" stroke-width="1" stroke-dasharray="1 2" fill="none" shape-rendering="crispEdges"/><path d="M216 918.5H1242M216 927.5H1242M216 937.5H1242M216 947.5H1242M216 956.5H1242M216 966.5H1242M216 976.5H1242M216 985.5H1242M216 995.5H1242M216 1005.5H1242M216 1014.5H1242M216 1024.5H1242M216 1034.5H1242M216 1047.5H1242M216 1056.5H1242M216 1066.5H1242M216 1076.5H1242M216 1086.5H1242M216 1095.5H1242M216 1105.5H1242M216 1115.5H1242M216 1125.5H1242M216 1134.5H1242M216 1144.5H1242M216 1154.5H1242M216 1164.5H1242M216 1177.5H1242M216 1193.5H1242M216 1210.5H1242M216 1226.5H1242M216 1243.5H1242M216 1259.5H1242M216 1276.5H1242M216 1293.5H1242" stroke="#9a9a9a" stroke-width="1" stroke-dasharray="1 2" fill="none" shape-rendering="crispEdges"/><path d="M203.5 918.00V1035.00M197 918.5H204M197 927.5H204M197 937.5H204M197 947.5H204M197 956.5H204M197 966.5H204M197 976.5H204M197 985.5H204M197 995.5H204M197 1005.5H204M197 1014.5H204M197 1024.5H204M197 1034.5H204M203.5 1047.00V1165.00M197 1047.5H204M197 1056.5H204M197 1066.5H204M197 1076.5H204M197 1086.5H204M197 1095.5H204M197 1105.5H204M197 1115.5H204M197 1125.5H204M197 1134.5H204M197 1144.5H204M197 1154.5H204M197 1164.5H204M203.5 1177.00V1294.00M197 1177.5H204M197 1185.5H204M197 1193.5H204M197 1201.5H204M197 1210.5H204M197 1218.5H204M197 1226.5H204M197 1235.5H204M197 1243.5H204M197 1251.5H204M197 1259.5H204M197 1268.5H204M197 1276.5H204M197 1284.5H204M197 1293.5H204" stroke="#111" stroke-width="1" fill="none" shape-rendering="crispEdges"/><path d="M216 1300.9H1242M216.5 1300.3V1312.5M226.5 1300.3V1304.7M236.5 1300.3V1308.5M246.5 1300.3V1304.7M257.5 1300.3V1308.5M267.5 1300.3V1304.7M277.5 1300.3V1308.5M287.5 1300.3V1304.7M298.5 1300.3V1308.5M308.5 1300.3V1304.7M318.5 1300.3V1312.5M328.5 1300.3V1304.7M339.5 1300.3V1308.5M349.5 1300.3V1304.7M359.5 1300.3V1308.5M369.5 1300.3V1304.7M380.5 1300.3V1308.5M390.5 1300.3V1304.7M400.5 1300.3V1308.5M410.5 1300.3V1304.7M421.5 1300.3V1312.5M431.5 1300.3V1304.7M441.5 1300.3V1308.5M451.5 1300.3V1304.7M462.5 1300.3V1308.5M472.5 1300.3V1304.7M482.5 1300.3V1308.5M492.5 1300.3V1304.7M503.5 1300.3V1308.5M513.5 1300.3V1304.7M523.5 1300.3V1312.5M533.5 1300.3V1304.7M544.5 1300.3V1308.5M554.5 1300.3V1304.7M564.5 1300.3V1308.5M574.5 1300.3V1304.7M585.5 1300.3V1308.5M595.5 1300.3V1304.7M605.5 1300.3V1308.5M615.5 1300.3V1304.7M626.5 1300.3V1312.5M636.5 1300.3V1304.7M646.5 1300.3V1308.5M656.5 1300.3V1304.7M667.5 1300.3V1308.5M677.5 1300.3V1304.7M687.5 1300.3V1308.5M697.5 1300.3V1304.7M708.5 1300.3V1308.5M718.5 1300.3V1304.7M728.5 1300.3V1312.5M738.5 1300.3V1304.7M749.5 1300.3V1308.5M759.5 1300.3V1304.7M769.5 1300.3V1308.5M779.5 1300.3V1304.7M790.5 1300.3V1308.5M800.5 1300.3V1304.7M810.5 1300.3V1308.5M820.5 1300.3V1304.7M831.5 1300.3V1312.5M841.5 1300.3V1304.7M851.5 1300.3V1308.5M861.5 1300.3V1304.7M872.5 1300.3V1308.5M882.5 1300.3V1304.7M892.5 1300.3V1308.5M902.5 1300.3V1304.7M913.5 1300.3V1308.5M923.5 1300.3V1304.7M933.5 1300.3V1312.5M943.5 1300.3V1304.7M954.5 1300.3V1308.5M964.5 1300.3V1304.7M974.5 1300.3V1308.5M984.5 1300.3V1304.7M995.5 1300.3V1308.5M1005.5 1300.3V1304.7M1015.5 1300.3V1308.5M1025.5 1300.3V1304.7M1036.5 1300.3V1312.5M1046.5 1300.3V1304.7M1056.5 1300.3V1308.5M1066.5 1300.3V1304.7M1077.5 1300.3V1308.5M1087.5 1300.3V1304.7M1097.5 1300.3V1308.5M1107.5 1300.3V1304.7M1118.5 1300.3V1308.5M1128.5 1300.3V1304.7M1138.5 1300.3V1312.5M1148.5 1300.3V1304.7M1159.5 1300.3V1308.5M1169.5 1300.3V1304.7M1179.5 1300.3V1308.5M1189.5 1300.3V1304.7M1200.5 1300.3V1308.5M1210.5 1300.3V1304.7M1220.5 1300.3V1308.5M1230.5 1300.3V1304.7M1241.5 1300.3V1312.5" stroke="#0c0c0c" stroke-width="1.25" fill="none"/><text x="216.7" y="1327.7" text-anchor="middle" textLength="28.2" lengthAdjust="spacingAndGlyphs" font-family="'Liberation Mono', monospace" font-size="14" fill="#111">0.0</text><text x="318.7" y="1327.7" text-anchor="middle" textLength="28.2" lengthAdjust="spacingAndGlyphs" font-family="'Liberation Mono', monospace" font-size="14" fill="#111">5.0</text><text x="421.7" y="1327.7" text-anchor="middle" textLength="37.6" lengthAdjust="spacingAndGlyphs" font-family="'Liberation Mono', monospace" font-size="14" fill="#111">10.0</text><text x="523.7" y="1327.7" text-anchor="middle" textLength="37.6" lengthAdjust="spacingAndGlyphs" font-family="'Liberation Mono', monospace" font-size="14" fill="#111">15.0</text><text x="626.7" y="1327.7" text-anchor="middle" textLength="37.6" lengthAdjust="spacingAndGlyphs" font-family="'Liberation Mono', monospace" font-size="14" fill="#111">20.0</text><text x="728.7" y="1327.7" text-anchor="middle" textLength="37.6" lengthAdjust="spacingAndGlyphs" font-family="'Liberation Mono', monospace" font-size="14" fill="#111">25.0</text><text x="831.7" y="1327.7" text-anchor="middle" textLength="37.6" lengthAdjust="spacingAndGlyphs" font-family="'Liberation Mono', monospace" font-size="14" fill="#111">30.0</text><text x="933.7" y="1327.7" text-anchor="middle" textLength="37.6" lengthAdjust="spacingAndGlyphs" font-family="'Liberation Mono', monospace" font-size="14" fill="#111">35.0</text><text x="1036.7" y="1327.7" text-anchor="middle" textLength="37.6" lengthAdjust="spacingAndGlyphs" font-family="'Liberation Mono', monospace" font-size="14" fill="#111">40.0</text><text x="1138.7" y="1327.7" text-anchor="middle" textLength="37.6" lengthAdjust="spacingAndGlyphs" font-family="'Liberation Mono', monospace" font-size="14" fill="#111">45.0</text><text x="1241.7" y="1327.7" text-anchor="middle" textLength="37.6" lengthAdjust="spacingAndGlyphs" font-family="'Liberation Mono', monospace" font-size="14" fill="#111">50.0</text><text x="729" y="1342.5" text-anchor="middle" textLength="80" lengthAdjust="spacingAndGlyphs" font-family="'Liberation Mono', monospace" font-size="13" fill="#111">time (ns)</text><text x="153.5" y="922.8" textLength="28.2" lengthAdjust="spacingAndGlyphs" font-family="'Liberation Mono', monospace" font-size="14" fill="#111">5.5</text><text x="153.5" y="960.6" textLength="28.2" lengthAdjust="spacingAndGlyphs" font-family="'Liberation Mono', monospace" font-size="14" fill="#111">3.5</text><text x="153.5" y="999.4" textLength="28.2" lengthAdjust="spacingAndGlyphs" font-family="'Liberation Mono', monospace" font-size="14" fill="#111">1.5</text><text x="153.5" y="1038.8" textLength="37.6" lengthAdjust="spacingAndGlyphs" font-family="'Liberation Mono', monospace" font-size="14" fill="#111">-0.5</text><text x="149.5" y="960.5" font-family="'Liberation Mono', monospace" font-size="11" fill="#222">)</text><text x="148.5" y="972.5" font-family="'Liberation Mono', monospace" font-size="13" fill="#222">v</text><text x="148" y="981.0" font-family="'Liberation Mono', monospace" font-size="11" fill="#222">(</text><text x="148.5" y="998.5" font-family="'Liberation Mono', monospace" font-size="12" fill="#222">V</text><text x="153.5" y="1052" textLength="28.2" lengthAdjust="spacingAndGlyphs" font-family="'Liberation Mono', monospace" font-size="14" fill="#111">5.5</text><text x="153.5" y="1090" textLength="28.2" lengthAdjust="spacingAndGlyphs" font-family="'Liberation Mono', monospace" font-size="14" fill="#111">3.5</text><text x="153.5" y="1128.8" textLength="28.2" lengthAdjust="spacingAndGlyphs" font-family="'Liberation Mono', monospace" font-size="14" fill="#111">1.5</text><text x="153.5" y="1168.4" textLength="37.6" lengthAdjust="spacingAndGlyphs" font-family="'Liberation Mono', monospace" font-size="14" fill="#111">-0.5</text><text x="149.5" y="1089.5" font-family="'Liberation Mono', monospace" font-size="11" fill="#222">)</text><text x="148.5" y="1101.5" font-family="'Liberation Mono', monospace" font-size="13" fill="#222">v</text><text x="148" y="1110.0" font-family="'Liberation Mono', monospace" font-size="11" fill="#222">(</text><text x="148.5" y="1127.5" font-family="'Liberation Mono', monospace" font-size="12" fill="#222">V</text><text x="153.5" y="1181.5" textLength="28.2" lengthAdjust="spacingAndGlyphs" font-family="'Liberation Mono', monospace" font-size="14" fill="#111">6.0</text><text x="153.5" y="1230.1" textLength="28.2" lengthAdjust="spacingAndGlyphs" font-family="'Liberation Mono', monospace" font-size="14" fill="#111">3.0</text><text x="153.5" y="1263.3" textLength="28.2" lengthAdjust="spacingAndGlyphs" font-family="'Liberation Mono', monospace" font-size="14" fill="#111">1.0</text><text x="153.5" y="1297.5" textLength="37.6" lengthAdjust="spacingAndGlyphs" font-family="'Liberation Mono', monospace" font-size="14" fill="#111">-1.0</text><text x="149.5" y="1219.5" font-family="'Liberation Mono', monospace" font-size="11" fill="#222">)</text><text x="148.5" y="1231.5" font-family="'Liberation Mono', monospace" font-size="13" fill="#222">v</text><text x="148" y="1240.0" font-family="'Liberation Mono', monospace" font-size="11" fill="#222">(</text><text x="148.5" y="1257.5" font-family="'Liberation Mono', monospace" font-size="12" fill="#222">V</text><path d="M216.5 1024.5V976.5" stroke="#1ec81e" stroke-width="1" fill="none"/><rect x="216" y="927.5" width="2.2" height="49.0" fill="#1ec81e"/><path d="M216 927.5H421.5V1024.5H626.5V927.5H831.5V1024.5H1036.5V927.5H1242" stroke="#1ec81e" stroke-width="3" fill="none" stroke-linejoin="miter"/><path d="M216.5 1154.5V1105.5" stroke="#dc0a0a" stroke-width="1" fill="none"/><rect x="216" y="1056.5" width="2.2" height="49.0" fill="#dc0a0a"/><path d="M216 1056.5H626.5V1154.5H1036.5V1056.5H1242" stroke="#dc0a0a" stroke-width="3" fill="none"/><path d="M217.2 1180V1216L218 1217V1249L219 1250V1263L220 1264V1272L221 1275L223 1277.5H421.5V1290.5V1252L422.5 1251V1222L423.5 1221V1201L424.5 1199L425.5 1194.5L427.5 1193.5H626.5V1180.5V1213L628.0 1207L629.0 1198L631.0 1194.5L633.5 1193.5H831.5V1207.5L832.5 1201L833.5 1193.5H1036.5V1180.5V1186L1037.5 1187V1209L1038.5 1210V1242L1039.5 1243V1265L1040.5 1266V1271L1041.5 1272L1042.0 1275.5L1044.0 1277.5H1242" stroke="#0808b4" stroke-width="3" fill="none" stroke-linejoin="miter" stroke-linecap="butt"/><rect x="216.5" y="1023.5" width="15" height="11" fill="#f4f4f4" fill-opacity="0.85" stroke="#8a8a8a" stroke-width="1"/><path d="M222 1025.5v7l5.5-3.5z" fill="#8a8a8a"/><rect x="216.5" y="1153.5" width="15" height="11" fill="#f4f4f4" fill-opacity="0.85" stroke="#8a8a8a" stroke-width="1"/><path d="M222 1155.5v7l5.5-3.5z" fill="#8a8a8a"/><rect x="216.5" y="1282.5" width="15" height="11" fill="#f4f4f4" fill-opacity="0.85" stroke="#8a8a8a" stroke-width="1"/><path d="M222 1284.5v7l5.5-3.5z" fill="#8a8a8a"/><rect x="105" y="918.0" width="26" height="17.5" fill="#fcfcfc"/><path d="M105 935.5H130.5V918.0" fill="none" stroke="#b0b0b0" stroke-width="1.5"/><g transform="translate(111 920.0)"><path d="M1 1h12l-4.5 5.5v6l-3-1.5v-4.5z" fill="#f0a040" stroke="#c87820" stroke-width="0.8"/></g><path d="M17.5 936.0V945.5H24" fill="none" stroke="#8a8a8a" stroke-width="1" stroke-dasharray="1 1" shape-rendering="crispEdges"/><rect x="26" y="940.0" width="15" height="11" fill="#1ec81e"/><text x="47" y="951.0" font-family="'Liberation Serif', serif" font-size="14.3" fill="#111">/A</text><g transform="translate(113 939.5)"><path d="M1 6c3-5 10-5 13 0-3 4.6-10 4.6-13 0z" fill="#e4ecf8" stroke="#4a68a8" stroke-width="1"/><circle cx="7.5" cy="6" r="2.4" fill="#2c4a8c"/><circle cx="7" cy="5.3" r="0.8" fill="#cfe0ff"/></g><rect x="105" y="1047.7" width="26" height="17.5" fill="#fcfcfc"/><path d="M105 1065.2H130.5V1047.7" fill="none" stroke="#b0b0b0" stroke-width="1.5"/><g transform="translate(111 1049.7)"><path d="M1 1h12l-4.5 5.5v6l-3-1.5v-4.5z" fill="#f0a040" stroke="#c87820" stroke-width="0.8"/></g><path d="M17.5 1065.7V1075.2H24" fill="none" stroke="#8a8a8a" stroke-width="1" stroke-dasharray="1 1" shape-rendering="crispEdges"/><rect x="26" y="1069.7" width="15" height="11" fill="#ff0000"/><text x="47" y="1080.7" font-family="'Liberation Serif', serif" font-size="14.3" fill="#111">/B</text><g transform="translate(113 1069.2)"><path d="M1 6c3-5 10-5 13 0-3 4.6-10 4.6-13 0z" fill="#e4ecf8" stroke="#4a68a8" stroke-width="1"/><circle cx="7.5" cy="6" r="2.4" fill="#2c4a8c"/><circle cx="7" cy="5.3" r="0.8" fill="#cfe0ff"/></g><rect x="105" y="1177.4" width="26" height="17.5" fill="#fcfcfc"/><path d="M105 1194.9H130.5V1177.4" fill="none" stroke="#b0b0b0" stroke-width="1.5"/><g transform="translate(111 1179.4)"><path d="M1 1h12l-4.5 5.5v6l-3-1.5v-4.5z" fill="#f0a040" stroke="#c87820" stroke-width="0.8"/></g><path d="M17.5 1195.4V1204.9H24" fill="none" stroke="#8a8a8a" stroke-width="1" stroke-dasharray="1 1" shape-rendering="crispEdges"/><rect x="26" y="1199.4" width="15" height="11" fill="#0000d8"/><text x="47" y="1210.4" font-family="'Liberation Serif', serif" font-size="14.3" fill="#111">/AnandB</text><g transform="translate(113 1198.9)"><path d="M1 6c3-5 10-5 13 0-3 4.6-10 4.6-13 0z" fill="#e4ecf8" stroke="#4a68a8" stroke-width="1"/><circle cx="7.5" cy="6" r="2.4" fill="#2c4a8c"/><circle cx="7" cy="5.3" r="0.8" fill="#cfe0ff"/></g><rect x="11.5" y="1172.5" width="6" height="127" rx="3" fill="url(#ol)" stroke="#5a5608" stroke-width="1"/></svg><div style="left:1px;top:1359px;width:1277px;height:18px;background:linear-gradient(#f2f2f2,#e3e3e3 45%,#c1c1c1);border-radius:0 0 5px 5px;box-shadow:inset -1px -1px 0 #b0b0b0;"></div><div style="left:4px;top:1363px;width:1px;height:9px;background:#a8a8a8;"></div><div style="left:6px;top:1363px;width:1px;height:9px;background:#a8a8a8;"></div><div style="left:8px;top:1363px;width:1px;height:9px;background:#a8a8a8;"></div><span class="t" style="left:10.3px;top:1361.52px;font-size:11.2px;line-height:11.2px;color:#000;">mouse L:</span><span class="t" style="left:635px;top:1361.52px;font-size:11.2px;line-height:11.2px;color:#000;">M:</span><span class="t" style="right:7.5px;top:1361.52px;font-size:11.2px;line-height:11.2px;color:#000;text-align:right;">R:</span><div style="left:1px;top:1377px;width:1277px;height:21px;background:#f1f1f1;"></div><span class="t" style="left:3px;top:1383.92px;font-size:11.2px;line-height:11.2px;color:#000;">30(52)</span><div style="left:41px;top:1380px;width:1px;height:17px;background:#6a6a6a;"></div><span class="t" style="left:50.3px;top:1383.92px;font-size:11.2px;line-height:11.2px;color:#000;">Move Selected Traces To New Strip</span><div style="left:1267px;top:1381px;width:9px;height:15px;background:#8e8e8e;box-shadow:inset 1px 1px 0 #555, 1px 1px 0 #fff;"></div><div style="left:0px;top:700px;width:1px;height:698px;background:#1c1c1c;"></div><div style="left:1278px;top:1377px;width:1px;height:21px;background:#444;"></div>
</div></body></html>
